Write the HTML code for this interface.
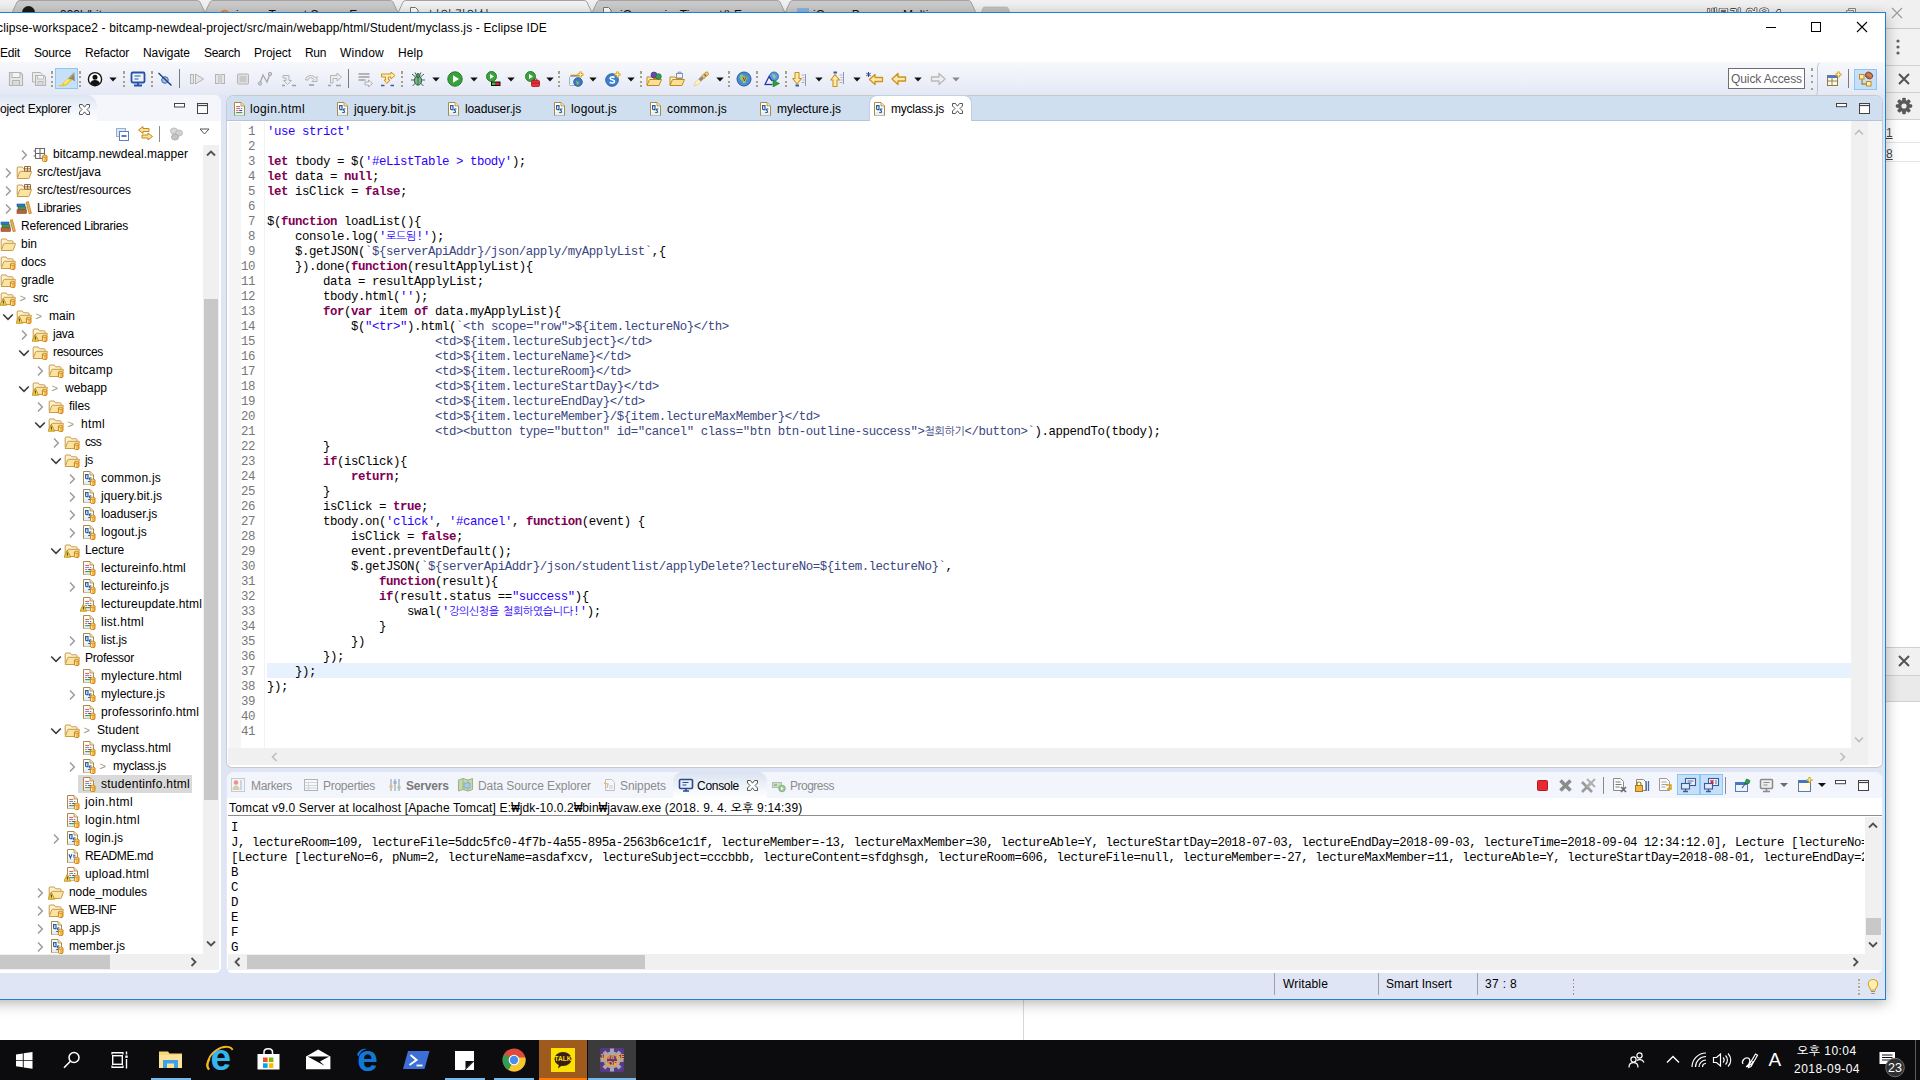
<!DOCTYPE html>
<html lang="ko"><head><meta charset="utf-8"><title>Eclipse IDE</title>
<style>
html,body{margin:0;padding:0;}
body{width:1920px;height:1080px;position:relative;overflow:hidden;background:#fff;font-family:"Liberation Sans","NanumGothic","Noto Sans CJK KR",sans-serif;font-size:12px;color:#000;}
.b{position:absolute;display:block;box-sizing:border-box;}
.t{position:absolute;white-space:pre;display:block;}
.m{font-family:"Liberation Mono","NanumGothic","Noto Sans CJK KR",monospace;}
.code{position:absolute;white-space:pre;display:block;font-family:"Liberation Mono","NanumGothic","Noto Sans CJK KR",monospace;font-size:12.4px;letter-spacing:-0.44px;height:15px;line-height:15px;color:#000;}
.code b{color:#7f0055;font-weight:bold;}
.code i{color:#2a00ff;font-style:normal;}
.code u{color:#3a4680;text-decoration:none;}
.code .k{font-size:11px;letter-spacing:-0.35px;}
.ln{position:absolute;white-space:pre;display:block;font-family:"Liberation Mono",monospace;font-size:12.4px;letter-spacing:-0.44px;height:15px;line-height:15px;color:#787878;text-align:right;width:30px;}
.con{position:absolute;white-space:pre;display:block;font-family:"Liberation Mono",monospace;font-size:12.4px;letter-spacing:-0.44px;height:15px;line-height:15px;color:#000;overflow:hidden;}

</style></head>
<body>
<div class="b" style="left:0px;top:0px;width:1920px;height:13px;background:#f1f1f1;"></div>
<svg class="b" style="left:0px;top:0px;" width="1100" height="13" viewBox="0 0 1100 13"><path d="M12 13L17 2Q18 0.5 20 0.5H197Q199 0.5 200 2L205 13z" fill="#cbcbcb" stroke="#a4a4a4" stroke-width="1"/><path d="M205 13L210 2Q211 0.5 213 0.5H390Q392 0.5 393 2L398 13z" fill="#cbcbcb" stroke="#a4a4a4" stroke-width="1"/><path d="M398 13L403 2Q404 0.5 406 0.5H584Q586 0.5 587 2L592 13z" fill="#f3f3f3" stroke="#a4a4a4" stroke-width="1"/><path d="M592 13L597 2Q598 0.5 600 0.5H777Q779 0.5 780 2L785 13z" fill="#cbcbcb" stroke="#a4a4a4" stroke-width="1"/><path d="M785 13L790 2Q791 0.5 793 0.5H968Q970 0.5 971 2L976 13z" fill="#cbcbcb" stroke="#a4a4a4" stroke-width="1"/><path d="M981 13l2-5q.3-1 1.500-1h22q1.200 0 1.500 1l2 5z" fill="#c4c4c4" stroke="#b0b0b0" stroke-width=".6"/></svg>
<div class="b" style="left:22px;top:6px;width:13px;height:7px;background:#1b1b1b;border-radius:7px 7px 0 0;"></div>
<span class="t " style="left:60px;top:6px;height:18px;line-height:18px;font-size:12px;color:#111;">333k/bit</span>
<span class="t " style="left:236px;top:6px;height:18px;line-height:18px;font-size:12px;color:#111;">java - Tomcat Server Er</span>
<span class="t " style="left:429px;top:6px;height:18px;line-height:18px;font-size:12px;color:#111;">나의 강의실</span>
<span class="t " style="left:620px;top:6px;height:18px;line-height:18px;font-size:12px;color:#111;">jQuery.ajaxTimeout() E</span>
<span class="t " style="left:813px;top:6px;height:18px;line-height:18px;font-size:12px;color:#111;">jQuery Progress Multi</span>
<svg class="b" style="left:218px;top:6px;" width="12" height="8" viewBox="0 0 12 8"><path d="M3 7c2-3 5-3 7-1" stroke="#f48024" stroke-width="1.600" fill="none"/></svg>
<svg class="b" style="left:409px;top:6px;" width="12" height="8" viewBox="0 0 12 8"><path d="M1.500 7V1.500h5l2.500 2.500V7" fill="#fff" stroke="#777" stroke-width="1"/></svg>
<svg class="b" style="left:602px;top:6px;" width="12" height="8" viewBox="0 0 12 8"><path d="M1.500 7V1.500h5l2.500 2.500V7" fill="#fff" stroke="#777" stroke-width="1"/></svg>
<div class="b" style="left:797px;top:8px;width:12px;height:5px;background:#8ab4e8;"></div>
<div class="b" style="left:1886px;top:0px;width:34px;height:28px;background:#f0f0f0;"></div>
<div class="b" style="left:1886px;top:28px;width:34px;height:1px;background:#c9c9c9;"></div>
<div class="b" style="left:1886px;top:29px;width:34px;height:36px;background:#f2f2f2;"></div>
<div class="b" style="left:1886px;top:65px;width:34px;height:1px;background:#d0d0d0;"></div>
<div class="b" style="left:1886px;top:66px;width:34px;height:26px;background:#f1f1f1;"></div>
<div class="b" style="left:1886px;top:92px;width:34px;height:1px;background:#d0d0d0;"></div>
<div class="b" style="left:1886px;top:93px;width:34px;height:26px;background:#f1f1f1;"></div>
<div class="b" style="left:1886px;top:119px;width:34px;height:1px;background:#d0d0d0;"></div>
<div class="b" style="left:1886px;top:142px;width:34px;height:1px;background:#e4e4e4;"></div>
<div class="b" style="left:1886px;top:161px;width:34px;height:1px;background:#e4e4e4;"></div>
<span class="t " style="left:1886px;top:124px;height:18px;line-height:18px;font-size:12px;color:#444;text-decoration:underline;">1</span>
<span class="t " style="left:1886px;top:145px;height:18px;line-height:18px;font-size:12px;color:#444;text-decoration:underline;">8</span>
<svg class="b" style="left:1890px;top:6px;" width="14" height="14" viewBox="0 0 14 14"><path d="M2 2l10 10M12 2l-10 10" stroke="#9a9a9a" stroke-width="1.100" fill="none"/></svg>
<svg class="b" style="left:1840px;top:0px;" width="30" height="13" viewBox="0 0 30 13"><path d="M6.500 13V10.500h7V13M8.500 10.500V8.500h7V13" stroke="#8a8a8a" stroke-width="1" fill="none"/></svg>
<span class="t " style="left:1705px;top:5.5px;height:18px;line-height:18px;font-size:13px;color:#fff;letter-spacing:0.099px;font-weight:bold;-webkit-text-stroke:1.300px #1a1a1a;paint-order:stroke fill;">새문자 없음 4</span>
<svg class="b" style="left:1893px;top:38px;" width="10" height="18" viewBox="0 0 10 18"><circle cx="5" cy="3" r="1.6" fill="#5f6368"/><circle cx="5" cy="9" r="1.6" fill="#5f6368"/><circle cx="5" cy="15" r="1.6" fill="#5f6368"/></svg>
<svg class="b" style="left:1897px;top:72px;" width="14" height="14" viewBox="0 0 14 14"><path d="M2 2l10 10M12 2L2 12" stroke="#555" stroke-width="2" fill="none"/></svg>
<svg class="b" style="left:1895px;top:97px;" width="18" height="18" viewBox="0 0 18 18"><g transform="translate(9 9)"><g fill="#5a5a5a"><rect x="-1.800" y="-8.200" width="3.600" height="16.400" rx="1"/><rect x="-1.800" y="-8.200" width="3.600" height="16.400" rx="1" transform="rotate(45)"/><rect x="-1.800" y="-8.200" width="3.600" height="16.400" rx="1" transform="rotate(90)"/><rect x="-1.800" y="-8.200" width="3.600" height="16.400" rx="1" transform="rotate(135)"/><circle r="6"/></g><circle r="2.600" fill="#f1f1f1"/></g></svg>
<div class="b" style="left:1886px;top:647px;width:34px;height:1px;background:#d0d0d0;"></div>
<div class="b" style="left:1886px;top:648px;width:34px;height:27px;background:#f1f1f1;"></div>
<div class="b" style="left:1886px;top:675px;width:34px;height:1px;background:#d0d0d0;"></div>
<div class="b" style="left:1886px;top:676px;width:34px;height:25px;background:#eaeaea;"></div>
<div class="b" style="left:1886px;top:701px;width:34px;height:1px;background:#d0d0d0;"></div>
<svg class="b" style="left:1897px;top:654px;" width="14" height="14" viewBox="0 0 14 14"><path d="M2 2l10 10M12 2L2 12" stroke="#555" stroke-width="2" fill="none"/></svg>
<div class="b" style="left:1023px;top:1000px;width:1px;height:40px;background:#d8d8d8;"></div>
<div class="b" style="left:-20px;top:12px;width:1906px;height:988px;background:#e0e5f5;border:1px solid #1a82d8;box-shadow:0 3px 13px rgba(0,0,0,.30);"></div>
<div class="b" style="left:-1px;top:13px;width:1886px;height:49px;background:#ffffff;"></div>
<span class="t " style="left:-3px;top:19px;height:18px;line-height:18px;font-size:12px;color:#000;letter-spacing:0.142px;">clipse-workspace2 - bitcamp-newdeal-project/src/main/webapp/html/Student/myclass.js - Eclipse IDE</span>
<svg class="b" style="left:1766px;top:21px;" width="12" height="12" viewBox="0 0 12 12"><path d="M0 6.500h10" stroke="#000" stroke-width="1"/></svg>
<svg class="b" style="left:1811px;top:22px;" width="11" height="11" viewBox="0 0 11 11"><rect x=".5" y=".5" width="9" height="9" fill="none" stroke="#000" stroke-width="1"/></svg>
<svg class="b" style="left:1856px;top:21px;" width="12" height="12" viewBox="0 0 12 12"><path d="M1 1l10 10M11 1L1 11" stroke="#000" stroke-width="1.100"/></svg>
<span class="t " style="left:0px;top:44px;height:18px;line-height:18px;font-size:12px;color:#000;letter-spacing:-0.170px;">Edit</span>
<span class="t " style="left:34px;top:44px;height:18px;line-height:18px;font-size:12px;color:#000;letter-spacing:-0.170px;">Source</span>
<span class="t " style="left:85px;top:44px;height:18px;line-height:18px;font-size:12px;color:#000;letter-spacing:-0.169px;">Refactor</span>
<span class="t " style="left:143px;top:44px;height:18px;line-height:18px;font-size:12px;color:#000;letter-spacing:-0.045px;">Navigate</span>
<span class="t " style="left:204px;top:44px;height:18px;line-height:18px;font-size:12px;color:#000;letter-spacing:-0.337px;">Search</span>
<span class="t " style="left:254px;top:44px;height:18px;line-height:18px;font-size:12px;color:#000;letter-spacing:-0.050px;">Project</span>
<span class="t " style="left:305px;top:44px;height:18px;line-height:18px;font-size:12px;color:#000;letter-spacing:-0.337px;">Run</span>
<span class="t " style="left:340px;top:44px;height:18px;line-height:18px;font-size:12px;color:#000;letter-spacing:0.220px;">Window</span>
<span class="t " style="left:398px;top:44px;height:18px;line-height:18px;font-size:12px;color:#000;letter-spacing:0.080px;">Help</span>
<div class="b" style="left:-1px;top:62px;width:1886px;height:33px;background:linear-gradient(180deg,#f7f8fc 0%,#eef1f9 50%,#e4e8f5 100%);"></div>
<svg class="b" style="left:7.5px;top:71px;" width="16" height="16" viewBox="0 0 16 16"><path d="M1.500 1.500h11l2 2v11h-13z" fill="#e6e6e6" stroke="#b4b4b4" stroke-width="1.200"/><rect x="4" y="1.500" width="8" height="5" fill="#f4f4f4" stroke="#b4b4b4"/><rect x="4.500" y="9.500" width="7" height="5" fill="#dadada" stroke="#b4b4b4"/></svg>
<svg class="b" style="left:30.5px;top:71px;" width="16" height="16" viewBox="0 0 16 16"><path d="M1.500 1.500h8l1.500 1.500v8h-9.500z" fill="#ececec" stroke="#b4b4b4"/><path d="M4.500 4.500h8.500l1.500 1.500v8.500h-10z" fill="#e6e6e6" stroke="#b4b4b4" stroke-width="1.100"/><rect x="6.500" y="4.500" width="6" height="3.500" fill="#f4f4f4" stroke="#b4b4b4" stroke-width=".8"/><rect x="7" y="10.500" width="5" height="4" fill="#dadada" stroke="#b4b4b4" stroke-width=".8"/></svg>
<div class="b" style="left:51px;top:71px;width:2px;height:3px;background:#a89f86;"></div>
<div class="b" style="left:51px;top:76px;width:2px;height:2px;background:#a89f86;"></div>
<div class="b" style="left:51px;top:80.5px;width:2px;height:2px;background:#a89f86;"></div>
<div class="b" style="left:51px;top:85px;width:2px;height:2px;background:#a89f86;"></div>
<div class="b" style="left:55px;top:68px;width:23px;height:21px;background:#c7e0fa;border:1px solid #8cc6f5;"></div>
<svg class="b" style="left:59px;top:71px;" width="16" height="16" viewBox="0 0 16 16"><path d="M0 14.600h5" stroke="#f2c81c" stroke-width="1.300"/><path d="M3.600 14.300L4.200 12.300 9 7.500 13.200 8.600 7 14.300z" fill="#f8d820" stroke="#e0b010" stroke-width=".5"/><path d="M5.500 12.500L9.500 8.500" stroke="#fdf0a0" stroke-width="1.200"/><path d="M9 7.500L15.300 1 15.800 10.500 13.200 8.600z" fill="#90866a"/><path d="M10.500 7L15 2.500" stroke="#b0a78a" stroke-width="1.200"/></svg>
<div class="b" style="left:79px;top:71px;width:2px;height:3px;background:#a89f86;"></div>
<div class="b" style="left:79px;top:76px;width:2px;height:2px;background:#a89f86;"></div>
<div class="b" style="left:79px;top:80.5px;width:2px;height:2px;background:#a89f86;"></div>
<div class="b" style="left:79px;top:85px;width:2px;height:2px;background:#a89f86;"></div>
<svg class="b" style="left:87.2px;top:71px;" width="16" height="16" viewBox="0 0 16 16"><circle cx="8" cy="8.200" r="6.600" fill="#fff" stroke="#111" stroke-width="1.400"/><circle cx="8" cy="6.200" r="2.500" fill="#111"/><path d="M3.200 12.300c.7-2.500 2.500-3.400 4.800-3.400s4.100.9 4.800 3.400A6.600 6.600 0 0 1 3.200 12.300z" fill="#111"/></svg>
<svg class="b" style="left:109px;top:76.7px;" width="8" height="5" viewBox="0 0 8 5"><path d="M.3.5h7.400L4 4.500z" fill="#111"/></svg>
<div class="b" style="left:122.5px;top:71px;width:2px;height:3px;background:#a89f86;"></div>
<div class="b" style="left:122.5px;top:76px;width:2px;height:2px;background:#a89f86;"></div>
<div class="b" style="left:122.5px;top:80.5px;width:2px;height:2px;background:#a89f86;"></div>
<div class="b" style="left:122.5px;top:85px;width:2px;height:2px;background:#a89f86;"></div>
<svg class="b" style="left:130px;top:71px;" width="16" height="16" viewBox="0 0 16 16"><rect x="1.500" y="1.500" width="13" height="10" rx="1.200" fill="#eef3fb" stroke="#2352a8" stroke-width="1.800"/><path d="M4.500 5h6M4.500 8h4" stroke="#2352a8" stroke-width="1.200"/><path d="M4 14.500h8M8 12v2.500" stroke="#2352a8" stroke-width="1.800"/></svg>
<div class="b" style="left:150.5px;top:71px;width:2px;height:3px;background:#a89f86;"></div>
<div class="b" style="left:150.5px;top:76px;width:2px;height:2px;background:#a89f86;"></div>
<div class="b" style="left:150.5px;top:80.5px;width:2px;height:2px;background:#a89f86;"></div>
<div class="b" style="left:150.5px;top:85px;width:2px;height:2px;background:#a89f86;"></div>
<svg class="b" style="left:157px;top:71px;" width="16" height="16" viewBox="0 0 16 16"><circle cx="8" cy="9" r="3.300" fill="#9ec1ea" stroke="#3a6ab0" stroke-width="1"/><path d="M1.500 2l13 12.500" stroke="#1c3a8a" stroke-width="1.300"/></svg>
<div class="b" style="left:179px;top:69px;width:1px;height:19px;background:#7a7a7a;"></div>
<svg class="b" style="left:188.5px;top:71px;" width="16" height="16" viewBox="0 0 16 16"><rect x="1.500" y="3.500" width="3" height="9" fill="#e6e6e6" stroke="#b4b4b4"/><path d="M6.500 3l8 5-8 5z" fill="#e6e6e6" stroke="#b4b4b4"/></svg>
<svg class="b" style="left:211.5px;top:71px;" width="16" height="16" viewBox="0 0 16 16"><rect x="3.500" y="3.500" width="3.500" height="9" fill="#e6e6e6" stroke="#b4b4b4"/><rect x="9" y="3.500" width="3.500" height="9" fill="#e6e6e6" stroke="#b4b4b4"/></svg>
<svg class="b" style="left:234.5px;top:71px;" width="16" height="16" viewBox="0 0 16 16"><rect x="2.500" y="3" width="11" height="10" rx="1" fill="#e0e0e0" stroke="#b4b4b4"/><rect x="4.500" y="5" width="7" height="6" fill="#c9c9c9"/></svg>
<svg class="b" style="left:257px;top:71px;" width="16" height="16" viewBox="0 0 16 16"><path d="M3 12L6 4l4 7 3-8" fill="none" stroke="#a8a8a8" stroke-width="1.300"/><circle cx="3" cy="12.500" r="1.700" fill="#d0d0d0" stroke="#a8a8a8"/><circle cx="13" cy="3" r="1.700" fill="#d0d0d0" stroke="#a8a8a8"/></svg>
<svg class="b" style="left:280.5px;top:71px;" width="16" height="16" viewBox="0 0 16 16"><path d="M2 4.500h6v5h2.500l-4 4-4-4H5v-2.500H2z" fill="#ededed" stroke="#b4b4b4"/><path d="M1 14.500h3M11 14.500h4" stroke="#a0a0a0" stroke-width="1.500"/></svg>
<svg class="b" style="left:303.5px;top:71px;" width="16" height="16" viewBox="0 0 16 16"><path d="M1.500 9c0-5 8-6 10-2l1.500-1.500v5h-5L10 8.500C8.500 6 3.500 6.500 4 9z" fill="#ededed" stroke="#b4b4b4"/><path d="M5 14h5" stroke="#a0a0a0" stroke-width="1.600"/></svg>
<svg class="b" style="left:327px;top:71px;" width="16" height="16" viewBox="0 0 16 16"><path d="M6 12V7.500h4V10l4.500-4L10 2v2.500H3.500V12z" fill="#ededed" stroke="#b4b4b4" transform="translate(0 0)"/><path d="M1 14.500h3M9 14.500h5" stroke="#a0a0a0" stroke-width="1.500"/></svg>
<div class="b" style="left:348px;top:69px;width:1px;height:19px;background:#7a7a7a;"></div>
<svg class="b" style="left:357px;top:71px;" width="16" height="16" viewBox="0 0 16 16"><path d="M1.500 3h11M1.500 6h11M1.500 9h7" stroke="#a0a0a0" stroke-width="1.500"/><path d="M8 11h3.500V9l4 3.500-4 3.500V14H8z" fill="#f2f2f2" stroke="#a8a8a8" stroke-width=".9"/></svg>
<svg class="b" style="left:380px;top:71px;" width="16" height="16" viewBox="0 0 16 16"><path d="M1.500 3h9.500V1l4 3.500L11 8V6H8.500v3H10l-3 3.500L4 9h1.500V6h-4z" fill="#fdecb0" stroke="#cf921c" stroke-width="1"/><path d="M1 14.500h3.500M10.500 14.500H14" stroke="#3a5a9a" stroke-width="1.600"/></svg>
<div class="b" style="left:401px;top:71px;width:2px;height:3px;background:#a89f86;"></div>
<div class="b" style="left:401px;top:76px;width:2px;height:2px;background:#a89f86;"></div>
<div class="b" style="left:401px;top:80.5px;width:2px;height:2px;background:#a89f86;"></div>
<div class="b" style="left:401px;top:85px;width:2px;height:2px;background:#a89f86;"></div>
<svg class="b" style="left:410px;top:71px;" width="16" height="16" viewBox="0 0 16 16"><g stroke="#3a6a4a" stroke-width="1" fill="none"><path d="M2 3l3.500 3M14 3l-3.500 3M1 9h3.500M15 9h-3.500M2.500 15l3-3M13.500 15l-3-3M6 3.500L5 1.500M10 3.500l1-2"/></g><ellipse cx="8" cy="9.500" rx="3.600" ry="4.600" fill="#7ab08a" stroke="#2a5a3a"/><circle cx="8" cy="4.500" r="2" fill="#5a8a6a" stroke="#2a5a3a" stroke-width=".8"/><path d="M8 6v8" stroke="#2a5a3a" stroke-width=".7"/></svg>
<svg class="b" style="left:431.5px;top:76.7px;" width="8" height="5" viewBox="0 0 8 5"><path d="M.3.5h7.400L4 4.500z" fill="#111"/></svg>
<svg class="b" style="left:447px;top:71px;" width="16" height="16" viewBox="0 0 16 16"><circle cx="8" cy="8" r="7.200" fill="#3aa23a" stroke="#1c7a24" stroke-width="1"/><path d="M6 4.200l6 3.800-6 3.800z" fill="#fff"/></svg>
<svg class="b" style="left:469.5px;top:76.7px;" width="8" height="5" viewBox="0 0 8 5"><path d="M.3.5h7.400L4 4.500z" fill="#111"/></svg>
<svg class="b" style="left:485px;top:71px;" width="16" height="16" viewBox="0 0 16 16"><circle cx="6.500" cy="5.500" r="5" fill="#3aa23a" stroke="#1c7a24" stroke-width=".9"/><path d="M5 3l4 2.500-4 2.500z" fill="#fff"/><rect x="6" y="10.500" width="9.500" height="4.500" fill="#111"/><rect x="7" y="11.500" width="3.500" height="2.500" fill="#2ac83a"/><rect x="10.500" y="11.500" width="4" height="2.500" fill="#e02020"/></svg>
<svg class="b" style="left:507px;top:76.7px;" width="8" height="5" viewBox="0 0 8 5"><path d="M.3.5h7.400L4 4.500z" fill="#111"/></svg>
<svg class="b" style="left:523.5px;top:71px;" width="16" height="16" viewBox="0 0 16 16"><circle cx="6.500" cy="5.500" r="5" fill="#3aa23a" stroke="#1c7a24" stroke-width=".9"/><path d="M5 3l4 2.500-4 2.500z" fill="#fff"/><rect x="7.500" y="9.500" width="8" height="6" rx="1" fill="#e8323a" stroke="#a8141c" stroke-width=".8"/><path d="M10 9.500V8h3v1.500M7.500 12h8" stroke="#a8141c" stroke-width=".9" fill="none"/></svg>
<svg class="b" style="left:545.5px;top:76.7px;" width="8" height="5" viewBox="0 0 8 5"><path d="M.3.5h7.400L4 4.500z" fill="#111"/></svg>
<div class="b" style="left:558px;top:71px;width:2px;height:3px;background:#a89f86;"></div>
<div class="b" style="left:558px;top:76px;width:2px;height:2px;background:#a89f86;"></div>
<div class="b" style="left:558px;top:80.5px;width:2px;height:2px;background:#a89f86;"></div>
<div class="b" style="left:558px;top:85px;width:2px;height:2px;background:#a89f86;"></div>
<svg class="b" style="left:567.5px;top:71px;" width="16" height="16" viewBox="0 0 16 16"><path d="M2.500 4.500h9M2.500 4.500" stroke="#c08a1e" stroke-width="1.500"/><rect x="1.500" y="5.500" width="9" height="9" rx="1" fill="#e8eef8" stroke="#9ab0d0"/><circle cx="10" cy="11" r="4.300" fill="#3a7ac8" stroke="#1c4a8a" stroke-width=".8"/><path d="M8 9.500c1 1 2.500.5 3 2s-1 2.500-2 2.500" fill="#7ac05a"/><path d="M12.500 .5v6M9.500 3.500h6" stroke="#d9a21b" stroke-width="2.400"/><path d="M12.500 1.500v4M10.500 3.500h4" stroke="#fff6c0" stroke-width=".9"/></svg>
<svg class="b" style="left:588.5px;top:76.7px;" width="8" height="5" viewBox="0 0 8 5"><path d="M.3.5h7.400L4 4.500z" fill="#111"/></svg>
<svg class="b" style="left:605px;top:71px;" width="16" height="16" viewBox="0 0 16 16"><circle cx="7" cy="9" r="6.300" fill="#3a82d0" stroke="#1c5aa0" stroke-width=".9"/><path d="M9.500 6.500c-2-1.200-4.500-.5-4.300 1 .2 1.700 4.300 1 4.300 3 0 1.600-2.800 2-4.800.8" fill="none" stroke="#fff" stroke-width="1.600"/><path d="M12.500 .5v6M9.500 3.500h6" stroke="#d9a21b" stroke-width="2.400"/><path d="M12.500 1.500v4M10.500 3.500h4" stroke="#fff6c0" stroke-width=".9"/></svg>
<svg class="b" style="left:626.5px;top:76.7px;" width="8" height="5" viewBox="0 0 8 5"><path d="M.3.5h7.400L4 4.500z" fill="#111"/></svg>
<div class="b" style="left:639.5px;top:71px;width:2px;height:3px;background:#a89f86;"></div>
<div class="b" style="left:639.5px;top:76px;width:2px;height:2px;background:#a89f86;"></div>
<div class="b" style="left:639.5px;top:80.5px;width:2px;height:2px;background:#a89f86;"></div>
<div class="b" style="left:639.5px;top:85px;width:2px;height:2px;background:#a89f86;"></div>
<svg class="b" style="left:646px;top:71px;" width="16" height="16" viewBox="0 0 16 16"><path d="M1 14V6h5l1.500 1.500H13V9" fill="#fdf0c8" stroke="#c08a1e"/><path d="M1 14.500l2.500-6H15.500l-2.500 6z" fill="#fbdf95" stroke="#c08a1e" stroke-linejoin="round"/><circle cx="8" cy="4" r="3" fill="#6a4aa0" stroke="#4a2a80" stroke-width=".7"/><circle cx="12.500" cy="5.500" r="2.800" fill="#3a9a5a" stroke="#1c6a3a" stroke-width=".7"/></svg>
<svg class="b" style="left:669px;top:71px;" width="16" height="16" viewBox="0 0 16 16"><path d="M1 14V6h5l1.500 1.500H13V9" fill="#fdf0c8" stroke="#c08a1e"/><path d="M1 14.500l2.500-6H15.500l-2.500 6z" fill="#fbdf95" stroke="#c08a1e" stroke-linejoin="round"/><rect x="7.500" y="2.500" width="6" height="4.500" fill="#eef3fb" stroke="#7a8ab0" stroke-width=".9"/><path d="M9 2.500V1.200h3v1.300" fill="none" stroke="#7a8ab0" stroke-width=".9"/></svg>
<svg class="b" style="left:693px;top:71px;" width="16" height="16" viewBox="0 0 16 16"><path d="M1 15l4-1.500 3-3L5.500 8l-3 3z" fill="#fdf3c0" stroke="#e0c060" stroke-width=".6"/><path d="M5.500 8l2.500 2.500 3-3L8.500 5z" fill="#8a8a8a"/><path d="M8.500 5L11 7.500l4.500-4c.5-1.500-1-3-2.500-2.500z" fill="#f7c85a" stroke="#c08a1e" stroke-width=".8"/><path d="M11.500 3.500l1.500 1.500" stroke="#3a5a9a" stroke-width="1.200"/></svg>
<svg class="b" style="left:715.5px;top:76.7px;" width="8" height="5" viewBox="0 0 8 5"><path d="M.3.5h7.400L4 4.500z" fill="#111"/></svg>
<div class="b" style="left:728px;top:71px;width:2px;height:3px;background:#a89f86;"></div>
<div class="b" style="left:728px;top:76px;width:2px;height:2px;background:#a89f86;"></div>
<div class="b" style="left:728px;top:80.5px;width:2px;height:2px;background:#a89f86;"></div>
<div class="b" style="left:728px;top:85px;width:2px;height:2px;background:#a89f86;"></div>
<svg class="b" style="left:735.5px;top:71px;" width="16" height="16" viewBox="0 0 16 16"><circle cx="8" cy="8" r="7" fill="#4a8ad8" stroke="#2a5aa0" stroke-width="1"/><path d="M4 4c2-1 3 0 4 1s3 0 3.500 1.500-1.500 2-1.500 3.500-1 3-2.500 2.500S7 10 5.500 9.500 3 6 4 4z" fill="#8ac86a"/><path d="M7 6l1.500 4 1.500-4" fill="none" stroke="#c03020" stroke-width=".9"/></svg>
<div class="b" style="left:756px;top:71px;width:2px;height:3px;background:#a89f86;"></div>
<div class="b" style="left:756px;top:76px;width:2px;height:2px;background:#a89f86;"></div>
<div class="b" style="left:756px;top:80.5px;width:2px;height:2px;background:#a89f86;"></div>
<div class="b" style="left:756px;top:85px;width:2px;height:2px;background:#a89f86;"></div>
<svg class="b" style="left:763.5px;top:71px;" width="16" height="16" viewBox="0 0 16 16"><circle cx="10" cy="5.500" r="4.500" fill="#5a9ae0" stroke="#2a5aa0" stroke-width=".8"/><path d="M8 3.500c1.500-.5 2.500.5 3.500 1.500s-1 2-1.500 3" fill="#9ad07a"/><path d="M1 13.500l4-8 3 4.500" fill="none" stroke="#2a3a9a" stroke-width="1.300"/><path d="M.5 13.500h8" stroke="#2a3a9a" stroke-width="1.300"/><path d="M9 9l6.500 3.500L9 16z" fill="#2aa03a" stroke="#1c7a24" stroke-width=".6"/></svg>
<div class="b" style="left:784.5px;top:71px;width:2px;height:3px;background:#a89f86;"></div>
<div class="b" style="left:784.5px;top:76px;width:2px;height:2px;background:#a89f86;"></div>
<div class="b" style="left:784.5px;top:80.5px;width:2px;height:2px;background:#a89f86;"></div>
<div class="b" style="left:784.5px;top:85px;width:2px;height:2px;background:#a89f86;"></div>
<svg class="b" style="left:792px;top:71px;" width="16" height="16" viewBox="0 0 16 16"><path d="M3 1.500h4v6h2.500L5 13 .7 7.500H3z" fill="#fdecb0" stroke="#cf921c" stroke-width="1.100" stroke-linejoin="round"/><path d="M13.500 3v12" stroke="#8a9ab0" stroke-width="1"/><path d="M9.500 4h3M10.500 6.500h2M10.500 9h2M9.500 11.500h3" stroke="#a0a8b8" stroke-width=".9"/><rect x="3.500" y="13.500" width="3.500" height="2" fill="#3a5aa8"/></svg>
<svg class="b" style="left:814.5px;top:76.7px;" width="8" height="5" viewBox="0 0 8 5"><path d="M.3.5h7.400L4 4.500z" fill="#111"/></svg>
<svg class="b" style="left:830px;top:71px;" width="16" height="16" viewBox="0 0 16 16"><path d="M3 15.500h4v-6.500h2.500L5 3.500.7 9H3z" fill="#fdecb0" stroke="#cf921c" stroke-width="1.100" stroke-linejoin="round"/><path d="M13.500 1v12" stroke="#8a9ab0" stroke-width="1"/><path d="M9.500 4h3M10.500 6.500h2M10.500 9h2M9.500 11.500h3" stroke="#a0a8b8" stroke-width=".9"/><rect x="3.500" y=".5" width="3.500" height="2" fill="#3a5aa8"/></svg>
<svg class="b" style="left:852.5px;top:76.7px;" width="8" height="5" viewBox="0 0 8 5"><path d="M.3.5h7.400L4 4.500z" fill="#111"/></svg>
<svg class="b" style="left:866px;top:71px;" width="18" height="16" viewBox="0 0 18 16"><path d="M8 3L2.500 8 8 13v-3h7.500V6H8z" fill="#fdecb0" stroke="#cf921c" stroke-width="1.300" stroke-linejoin="round" transform="translate(1 0.500)"/><path d="M2.500 1v5M.3 2.200l4.400 2.600M4.700 2.200L.3 4.800" stroke="#2a4a9a" stroke-width="1"/></svg>
<svg class="b" style="left:891px;top:71px;" width="16" height="16" viewBox="0 0 16 16"><path d="M7 2.500L1 8l6 5.500V10h7.500V6H7z" fill="#fdecb0" stroke="#cf921c" stroke-width="1.400" stroke-linejoin="round"/></svg>
<svg class="b" style="left:913.5px;top:76.7px;" width="8" height="5" viewBox="0 0 8 5"><path d="M.3.5h7.400L4 4.500z" fill="#111"/></svg>
<svg class="b" style="left:929.5px;top:71px;" width="16" height="16" viewBox="0 0 16 16"><path d="M9 2.500L15 8l-6 5.500V10H1.500V6H9z" fill="#f0f0f0" stroke="#b8b8b8" stroke-width="1.300" stroke-linejoin="round"/></svg>
<svg class="b" style="left:951.5px;top:76.7px;" width="8" height="5" viewBox="0 0 8 5"><path d="M.3.5h7.400L4 4.500z" fill="#8a8a8a"/></svg>
<div class="b" style="left:1728px;top:68px;width:77px;height:21px;background:#ffffff;border:1px solid #6e6e6e;"></div>
<span class="t " style="left:1731px;top:70px;height:18px;line-height:18px;font-size:12px;color:#5f5f5f;letter-spacing:-0.085px;">Quick Access</span>
<div class="b" style="left:1811px;top:68px;width:2px;height:3px;background:#a89f86;"></div>
<div class="b" style="left:1811px;top:74.5px;width:2px;height:2px;background:#a89f86;"></div>
<div class="b" style="left:1811px;top:81px;width:2px;height:2px;background:#a89f86;"></div>
<div class="b" style="left:1811px;top:87.5px;width:2px;height:2px;background:#a89f86;"></div>
<svg class="b" style="left:1813px;top:62px;" width="10" height="34" viewBox="0 0 10 34"><path d="M2.500 33.500C4 32.500 4.500 31.500 4.500 29V5.500C4.500 3.500 5 2.500 6.500 1" fill="none" stroke="#bcc3d6" stroke-width="1"/></svg>
<svg class="b" style="left:1825.5px;top:71px;" width="16" height="16" viewBox="0 0 16 16"><rect x="1.500" y="4.500" width="10" height="10" fill="#fdf6e0" stroke="#8a7a4a"/><rect x="1.500" y="4.500" width="10" height="2.500" fill="#4a7ac8"/><path d="M1.500 10h10M6 7v7.500" stroke="#8a7a4a" stroke-width=".9"/><path d="M12.500 .5v6M9.500 3.500h6" stroke="#d9a21b" stroke-width="2.400"/><path d="M12.500 1.500v4M10.500 3.500h4" stroke="#fff6c0" stroke-width=".9"/></svg>
<div class="b" style="left:1848px;top:69px;width:1px;height:19px;background:#7a7a7a;"></div>
<div class="b" style="left:1854px;top:69px;width:23px;height:21px;background:#c7e0fa;border:1px solid #8cc6f5;"></div>
<svg class="b" style="left:1857.5px;top:71px;" width="16" height="16" viewBox="0 0 16 16"><path d="M4 6v7h5M4 9.500" fill="none" stroke="#b08a2a" stroke-width="1.300"/><rect x="1.500" y="3.500" width="4.500" height="4.500" fill="#fdf0b0" stroke="#c08a1e"/><rect x="8.500" y="10.500" width="4.500" height="4.500" fill="#fdf0b0" stroke="#c08a1e"/><ellipse cx="11" cy="4.500" rx="3.800" ry="3.200" transform="rotate(35 11 4.500)" fill="#b86a3a" stroke="#7a3a1a" stroke-width=".8"/><path d="M8.500 3l5 3.500M9.500 2l4.500 3" stroke="#e8b08a" stroke-width=".6"/></svg>
<div class="b" style="left:-1px;top:95px;width:222px;height:878px;background:#ffffff;border-radius:0 7px 6px 0;"></div>
<div class="b" style="left:-1px;top:95px;width:222px;height:26px;background:#f4f6fc;border-radius:0 7px 0 0;"></div>
<div class="b" style="left:-1px;top:95px;width:98px;height:26px;background:linear-gradient(180deg,#dde5f2 0%,#eef2f9 45%,#ffffff 100%);border-radius:0 10px 0 0;"></div>
<span class="t " style="left:0px;top:100px;height:18px;line-height:18px;font-size:12px;color:#000;letter-spacing:-0.169px;">oject Explorer</span>
<svg class="b" style="left:78px;top:102.5px;" width="13" height="13" viewBox="0 0 13 13"><path d="M1.5 1.500h3l2 2.700 2-2.700h3v2.500L9 6.500l2.500 2.500v2.500h-3l-2-2.700-2 2.700h-3V9L4 6.500 1.500 4z" fill="#fff" stroke="#555" stroke-width="1"/></svg>
<svg class="b" style="left:173.5px;top:103px;" width="12" height="6" viewBox="0 0 12 6"><rect x=".5" y=".5" width="10" height="3.500" fill="#fff" stroke="#444" stroke-width="1"/></svg>
<svg class="b" style="left:196.5px;top:102.5px;" width="12" height="12" viewBox="0 0 12 12"><rect x=".5" y=".5" width="10" height="10" fill="#fff" stroke="#444" stroke-width="1"/><path d="M.5 2.500h10" stroke="#444" stroke-width="1.200"/></svg>
<svg class="b" style="left:115px;top:126.5px;" width="16" height="16" viewBox="0 0 16 16"><rect x="1.500" y="1.500" width="9" height="8" fill="#dbe7f5" stroke="#9ab0d0" stroke-width="1"/><rect x="4.500" y="4.500" width="9" height="9" fill="#fff" stroke="#5a82c0" stroke-width="1"/><path d="M6.500 9h5" stroke="#1d4fa0" stroke-width="1.500"/></svg>
<svg class="b" style="left:137px;top:125px;" width="17" height="17" viewBox="0 0 17 17"><path d="M6 1.500L1.500 5 6 8.500v-2h6v-3H6z" fill="#fbe29a" stroke="#c08a1e" stroke-width="1"/><path d="M11 8l4.500 3.500L11 15v-2H5v-3h6z" fill="#fbe29a" stroke="#c08a1e" stroke-width="1"/></svg>
<div class="b" style="left:159px;top:126px;width:1px;height:16px;background:#8a8a8a;"></div>
<svg class="b" style="left:168px;top:126px;" width="16" height="16" viewBox="0 0 16 16"><ellipse cx="6" cy="5" rx="3.500" ry="3" fill="#d8d8d8" stroke="#bdbdbd"/><ellipse cx="11" cy="7" rx="3.500" ry="3" fill="#d0d0d0" stroke="#bdbdbd"/><ellipse cx="7" cy="11" rx="3.500" ry="3" fill="#c4c4c4" stroke="#b0b0b0"/></svg>
<svg class="b" style="left:199px;top:128px;" width="12" height="8" viewBox="0 0 12 8"><path d="M1 1h9L5.500 6z" fill="#fff" stroke="#555" stroke-width="1"/></svg>
<svg class="b" style="left:19.5px;top:149px;" width="8" height="12" viewBox="0 0 8 12"><path d="M2 1.500L6.300 6 2 10.500" fill="none" stroke="#9c9c9c" stroke-width="1.500"/></svg>
<svg class="b" style="left:32px;top:146px;" width="16" height="16" viewBox="0 0 16 16"><g fill="none" stroke="#6a6a6a" stroke-width="1.100"><path d="M3.500 2.500h9v10h-9zM3.500 7.500h9M8 2.500v10M1.500 5h2M1.500 10h2"/></g><g><path d="M10.4 10.2h4.6v4.6c0 1.100-4.600 1.100-4.600 0z" fill="#f9b63e" stroke="#c47c10" stroke-width=".9"/><path d="M11.600 11.500v3.600" stroke="#fde9b0" stroke-width="1"/><ellipse cx="12.700" cy="10.200" rx="2.300" ry="1" fill="#fde7a8" stroke="#c47c10" stroke-width=".8"/></g></svg>
<span class="t " style="left:53px;top:145px;height:18px;line-height:18px;font-size:12px;color:#000;letter-spacing:0.042px;">bitcamp.newdeal.mapper</span>
<svg class="b" style="left:3.5px;top:167px;" width="8" height="12" viewBox="0 0 8 12"><path d="M2 1.500L6.300 6 2 10.500" fill="none" stroke="#9c9c9c" stroke-width="1.500"/></svg>
<svg class="b" style="left:16px;top:164px;" width="16" height="16" viewBox="0 0 16 16"><path d="M1.2 13.200V3.800c0-.5.300-.8.800-.8h4.200l1.300 1.800h4.700c.5 0 .8.300.8.800v2" fill="#fdf3d2" stroke="#c2923c" stroke-width=".9"/><path d="M1.200 14.500l2.500-6.600c.1-.4.400-.6.800-.6h10.400c.5 0 .7.300.5.800l-2.200 5.900c-.1.300-.4.500-.8.500z" fill="#fbe3a0" stroke="#c2923c" stroke-width=".9" stroke-linejoin="round"/><g stroke="#8a5a2a" stroke-width=".9" fill="#fff8e8"><path d="M8.500 2.500h6v4.600h-6z"/><path d="M8.500 4.800h6M11.500 2.500v4.600" fill="none"/></g></svg>
<span class="t " style="left:37px;top:163px;height:18px;line-height:18px;font-size:12px;color:#000;letter-spacing:-0.002px;">src/test/java</span>
<svg class="b" style="left:3.5px;top:185px;" width="8" height="12" viewBox="0 0 8 12"><path d="M2 1.500L6.300 6 2 10.500" fill="none" stroke="#9c9c9c" stroke-width="1.500"/></svg>
<svg class="b" style="left:16px;top:182px;" width="16" height="16" viewBox="0 0 16 16"><path d="M1.2 13.200V3.800c0-.5.300-.8.800-.8h4.200l1.300 1.800h4.700c.5 0 .8.300.8.800v2" fill="#fdf3d2" stroke="#c2923c" stroke-width=".9"/><path d="M1.200 14.500l2.500-6.600c.1-.4.400-.6.800-.6h10.400c.5 0 .7.300.5.800l-2.200 5.900c-.1.300-.4.500-.8.500z" fill="#fbe3a0" stroke="#c2923c" stroke-width=".9" stroke-linejoin="round"/><g stroke="#8a5a2a" stroke-width=".9" fill="#fff8e8"><path d="M8.500 2.500h6v4.600h-6z"/><path d="M8.500 4.800h6M11.500 2.500v4.600" fill="none"/></g></svg>
<span class="t " style="left:37px;top:181px;height:18px;line-height:18px;font-size:12px;color:#000;letter-spacing:-0.039px;">src/test/resources</span>
<svg class="b" style="left:3.5px;top:203px;" width="8" height="12" viewBox="0 0 8 12"><path d="M2 1.500L6.300 6 2 10.500" fill="none" stroke="#9c9c9c" stroke-width="1.500"/></svg>
<svg class="b" style="left:16px;top:200px;" width="16" height="16" viewBox="0 0 16 16"><rect x="1" y="4" width="8" height="2.600" fill="#2a78c8" stroke="#1d5a9a" stroke-width=".6"/><rect x="2" y="6.800" width="8" height="2.800" fill="#3f9a5a" stroke="#2a6a3a" stroke-width=".6"/><rect x="1" y="9.800" width="9.500" height="3.600" fill="#b8623a" stroke="#8a4222" stroke-width=".6"/><path d="M10.200 2.200l2.200-.6 3 11.600-2.300.5z" fill="#f0b04a" stroke="#b8781e" stroke-width=".7"/></svg>
<span class="t " style="left:37px;top:199px;height:18px;line-height:18px;font-size:12px;color:#000;letter-spacing:-0.224px;">Libraries</span>
<svg class="b" style="left:0px;top:218px;" width="16" height="16" viewBox="0 0 16 16"><rect x="1" y="4" width="8" height="2.600" fill="#2a78c8" stroke="#1d5a9a" stroke-width=".6"/><rect x="2" y="6.800" width="8" height="2.800" fill="#3f9a5a" stroke="#2a6a3a" stroke-width=".6"/><rect x="1" y="9.800" width="9.500" height="3.600" fill="#b8623a" stroke="#8a4222" stroke-width=".6"/><path d="M10.200 2.200l2.200-.6 3 11.600-2.300.5z" fill="#f0b04a" stroke="#b8781e" stroke-width=".7"/></svg>
<span class="t " style="left:21px;top:217px;height:18px;line-height:18px;font-size:12px;color:#000;letter-spacing:-0.220px;">Referenced Libraries</span>
<svg class="b" style="left:0px;top:236px;" width="16" height="16" viewBox="0 0 16 16"><path d="M1.2 13.200V3.800c0-.5.300-.8.800-.8h4.200l1.300 1.800h4.700c.5 0 .8.300.8.800v2" fill="#fdf3d2" stroke="#c2923c" stroke-width=".9"/><path d="M1.200 14.500l2.500-6.600c.1-.4.400-.6.800-.6h10.400c.5 0 .7.300.5.800l-2.200 5.900c-.1.300-.4.500-.8.500z" fill="#fbe3a0" stroke="#c2923c" stroke-width=".9" stroke-linejoin="round"/></svg>
<span class="t " style="left:21px;top:235px;height:18px;line-height:18px;font-size:12px;color:#000;letter-spacing:-0.004px;">bin</span>
<svg class="b" style="left:0px;top:254px;" width="16" height="16" viewBox="0 0 16 16"><path d="M1.2 13.200V3.800c0-.5.300-.8.800-.8h4.200l1.300 1.800h4.700c.5 0 .8.300.8.800v2" fill="#fdf3d2" stroke="#c2923c" stroke-width=".9"/><path d="M1.200 14.500l2.500-6.600c.1-.4.400-.6.800-.6h10.400c.5 0 .7.300.5.800l-2.200 5.900c-.1.300-.4.500-.8.500z" fill="#fbe3a0" stroke="#c2923c" stroke-width=".9" stroke-linejoin="round"/><g><path d="M10.4 10.2h4.6v4.6c0 1.100-4.600 1.100-4.600 0z" fill="#f9b63e" stroke="#c47c10" stroke-width=".9"/><path d="M11.600 11.500v3.600" stroke="#fde9b0" stroke-width="1"/><ellipse cx="12.700" cy="10.200" rx="2.300" ry="1" fill="#fde7a8" stroke="#c47c10" stroke-width=".8"/></g></svg>
<span class="t " style="left:21px;top:253px;height:18px;line-height:18px;font-size:12px;color:#000;letter-spacing:-0.087px;">docs</span>
<svg class="b" style="left:0px;top:272px;" width="16" height="16" viewBox="0 0 16 16"><path d="M1.2 13.200V3.800c0-.5.300-.8.800-.8h4.200l1.300 1.800h4.700c.5 0 .8.300.8.800v2" fill="#fdf3d2" stroke="#c2923c" stroke-width=".9"/><path d="M1.200 14.500l2.500-6.600c.1-.4.400-.6.800-.6h10.400c.5 0 .7.300.5.800l-2.200 5.900c-.1.300-.4.500-.8.500z" fill="#fbe3a0" stroke="#c2923c" stroke-width=".9" stroke-linejoin="round"/><g><path d="M10.4 10.2h4.6v4.6c0 1.100-4.600 1.100-4.600 0z" fill="#f9b63e" stroke="#c47c10" stroke-width=".9"/><path d="M11.600 11.500v3.600" stroke="#fde9b0" stroke-width="1"/><ellipse cx="12.700" cy="10.200" rx="2.300" ry="1" fill="#fde7a8" stroke="#c47c10" stroke-width=".8"/></g></svg>
<span class="t " style="left:21px;top:271px;height:18px;line-height:18px;font-size:12px;color:#000;letter-spacing:-0.059px;">gradle</span>
<svg class="b" style="left:0px;top:290px;" width="16" height="16" viewBox="0 0 16 16"><path d="M1.2 13.200V3.800c0-.5.300-.8.800-.8h4.200l1.300 1.800h4.700c.5 0 .8.300.8.800v2" fill="#fdf3d2" stroke="#c2923c" stroke-width=".9"/><path d="M1.200 14.500l2.500-6.600c.1-.4.400-.6.800-.6h10.400c.5 0 .7.300.5.800l-2.200 5.900c-.1.300-.4.500-.8.500z" fill="#fbe3a0" stroke="#c2923c" stroke-width=".9" stroke-linejoin="round"/><g><path d="M10.4 10.2h4.6v4.6c0 1.100-4.600 1.100-4.600 0z" fill="#f9b63e" stroke="#c47c10" stroke-width=".9"/><path d="M11.600 11.500v3.600" stroke="#fde9b0" stroke-width="1"/><ellipse cx="12.700" cy="10.200" rx="2.300" ry="1" fill="#fde7a8" stroke="#c47c10" stroke-width=".8"/></g><g><path d="M3.3 8.200l3.400 7H-.1z" fill="#f9d24a" stroke="#b8860b" stroke-width=".8" stroke-linejoin="round"/><rect x="2.900" y="10.600" width=".9" height="2.400" fill="#333"/><rect x="2.900" y="13.400" width=".9" height=".9" fill="#333"/></g></svg>
<span class="t " style="left:19.5px;top:289px;height:18px;line-height:18px;font-size:11px;color:#a39676;">&gt;</span>
<span class="t " style="left:33px;top:289px;height:18px;line-height:18px;font-size:12px;color:#000;letter-spacing:-0.332px;">src</span>
<svg class="b" style="left:1.5px;top:312.7px;" width="12" height="8" viewBox="0 0 12 8"><path d="M1.200 1.500L6 6.300 10.800 1.500" fill="none" stroke="#3c3c3c" stroke-width="1.600"/></svg>
<svg class="b" style="left:16px;top:308px;" width="16" height="16" viewBox="0 0 16 16"><path d="M1.2 13.200V3.800c0-.5.300-.8.800-.8h4.200l1.300 1.800h4.700c.5 0 .8.300.8.800v2" fill="#fdf3d2" stroke="#c2923c" stroke-width=".9"/><path d="M1.200 14.500l2.500-6.600c.1-.4.400-.6.800-.6h10.400c.5 0 .7.300.5.800l-2.200 5.900c-.1.300-.4.500-.8.500z" fill="#fbe3a0" stroke="#c2923c" stroke-width=".9" stroke-linejoin="round"/><g><path d="M10.4 10.2h4.6v4.6c0 1.100-4.600 1.100-4.600 0z" fill="#f9b63e" stroke="#c47c10" stroke-width=".9"/><path d="M11.600 11.500v3.600" stroke="#fde9b0" stroke-width="1"/><ellipse cx="12.700" cy="10.200" rx="2.300" ry="1" fill="#fde7a8" stroke="#c47c10" stroke-width=".8"/></g><g><path d="M3.3 8.200l3.400 7H-.1z" fill="#f9d24a" stroke="#b8860b" stroke-width=".8" stroke-linejoin="round"/><rect x="2.900" y="10.600" width=".9" height="2.400" fill="#333"/><rect x="2.900" y="13.400" width=".9" height=".9" fill="#333"/></g></svg>
<span class="t " style="left:35.5px;top:307px;height:18px;line-height:18px;font-size:11px;color:#a39676;">&gt;</span>
<span class="t " style="left:49px;top:307px;height:18px;line-height:18px;font-size:12px;color:#000;letter-spacing:-0.002px;">main</span>
<svg class="b" style="left:19.5px;top:329px;" width="8" height="12" viewBox="0 0 8 12"><path d="M2 1.500L6.300 6 2 10.500" fill="none" stroke="#9c9c9c" stroke-width="1.500"/></svg>
<svg class="b" style="left:32px;top:326px;" width="16" height="16" viewBox="0 0 16 16"><path d="M1.2 13.200V3.800c0-.5.300-.8.800-.8h4.200l1.300 1.800h4.700c.5 0 .8.300.8.800v2" fill="#fdf3d2" stroke="#c2923c" stroke-width=".9"/><path d="M1.200 14.500l2.500-6.600c.1-.4.400-.6.800-.6h10.400c.5 0 .7.300.5.800l-2.200 5.900c-.1.300-.4.500-.8.500z" fill="#fbe3a0" stroke="#c2923c" stroke-width=".9" stroke-linejoin="round"/><g><path d="M10.4 10.2h4.6v4.6c0 1.100-4.600 1.100-4.600 0z" fill="#f9b63e" stroke="#c47c10" stroke-width=".9"/><path d="M11.600 11.500v3.600" stroke="#fde9b0" stroke-width="1"/><ellipse cx="12.700" cy="10.200" rx="2.300" ry="1" fill="#fde7a8" stroke="#c47c10" stroke-width=".8"/></g><g><path d="M3.3 8.200l3.400 7H-.1z" fill="#f9d24a" stroke="#b8860b" stroke-width=".8" stroke-linejoin="round"/><rect x="2.900" y="10.600" width=".9" height="2.400" fill="#333"/><rect x="2.900" y="13.400" width=".9" height=".9" fill="#333"/></g></svg>
<span class="t " style="left:53px;top:325px;height:18px;line-height:18px;font-size:12px;color:#000;letter-spacing:-0.253px;">java</span>
<svg class="b" style="left:17.5px;top:348.7px;" width="12" height="8" viewBox="0 0 12 8"><path d="M1.200 1.500L6 6.300 10.800 1.500" fill="none" stroke="#3c3c3c" stroke-width="1.600"/></svg>
<svg class="b" style="left:32px;top:344px;" width="16" height="16" viewBox="0 0 16 16"><path d="M1.2 13.200V3.800c0-.5.300-.8.800-.8h4.200l1.300 1.800h4.700c.5 0 .8.300.8.800v2" fill="#fdf3d2" stroke="#c2923c" stroke-width=".9"/><path d="M1.200 14.500l2.500-6.600c.1-.4.400-.6.800-.6h10.400c.5 0 .7.300.5.800l-2.200 5.900c-.1.300-.4.500-.8.500z" fill="#fbe3a0" stroke="#c2923c" stroke-width=".9" stroke-linejoin="round"/><g><path d="M10.4 10.2h4.6v4.6c0 1.100-4.600 1.100-4.600 0z" fill="#f9b63e" stroke="#c47c10" stroke-width=".9"/><path d="M11.600 11.500v3.600" stroke="#fde9b0" stroke-width="1"/><ellipse cx="12.700" cy="10.200" rx="2.300" ry="1" fill="#fde7a8" stroke="#c47c10" stroke-width=".8"/></g></svg>
<span class="t " style="left:53px;top:343px;height:18px;line-height:18px;font-size:12px;color:#000;letter-spacing:-0.299px;">resources</span>
<svg class="b" style="left:35.5px;top:365px;" width="8" height="12" viewBox="0 0 8 12"><path d="M2 1.500L6.300 6 2 10.500" fill="none" stroke="#9c9c9c" stroke-width="1.500"/></svg>
<svg class="b" style="left:48px;top:362px;" width="16" height="16" viewBox="0 0 16 16"><path d="M1.2 13.200V3.800c0-.5.300-.8.800-.8h4.200l1.300 1.800h4.700c.5 0 .8.300.8.800v2" fill="#fdf3d2" stroke="#c2923c" stroke-width=".9"/><path d="M1.200 14.500l2.500-6.600c.1-.4.400-.6.800-.6h10.400c.5 0 .7.300.5.800l-2.200 5.900c-.1.300-.4.500-.8.500z" fill="#fbe3a0" stroke="#c2923c" stroke-width=".9" stroke-linejoin="round"/><g><path d="M10.4 10.2h4.6v4.6c0 1.100-4.600 1.100-4.600 0z" fill="#f9b63e" stroke="#c47c10" stroke-width=".9"/><path d="M11.600 11.500v3.600" stroke="#fde9b0" stroke-width="1"/><ellipse cx="12.700" cy="10.200" rx="2.300" ry="1" fill="#fde7a8" stroke="#c47c10" stroke-width=".8"/></g></svg>
<span class="t " style="left:69px;top:361px;height:18px;line-height:18px;font-size:12px;color:#000;letter-spacing:0.283px;">bitcamp</span>
<svg class="b" style="left:17.5px;top:384.7px;" width="12" height="8" viewBox="0 0 12 8"><path d="M1.200 1.500L6 6.300 10.800 1.500" fill="none" stroke="#3c3c3c" stroke-width="1.600"/></svg>
<svg class="b" style="left:32px;top:380px;" width="16" height="16" viewBox="0 0 16 16"><path d="M1.2 13.200V3.800c0-.5.300-.8.800-.8h4.200l1.300 1.800h4.700c.5 0 .8.300.8.800v2" fill="#fdf3d2" stroke="#c2923c" stroke-width=".9"/><path d="M1.200 14.500l2.500-6.600c.1-.4.400-.6.800-.6h10.400c.5 0 .7.300.5.800l-2.200 5.900c-.1.300-.4.500-.8.500z" fill="#fbe3a0" stroke="#c2923c" stroke-width=".9" stroke-linejoin="round"/><g><path d="M10.4 10.2h4.6v4.6c0 1.100-4.600 1.100-4.600 0z" fill="#f9b63e" stroke="#c47c10" stroke-width=".9"/><path d="M11.600 11.500v3.600" stroke="#fde9b0" stroke-width="1"/><ellipse cx="12.700" cy="10.200" rx="2.300" ry="1" fill="#fde7a8" stroke="#c47c10" stroke-width=".8"/></g><g><path d="M3.3 8.200l3.400 7H-.1z" fill="#f9d24a" stroke="#b8860b" stroke-width=".8" stroke-linejoin="round"/><rect x="2.900" y="10.600" width=".9" height="2.400" fill="#333"/><rect x="2.900" y="13.400" width=".9" height=".9" fill="#333"/></g></svg>
<span class="t " style="left:51.5px;top:379px;height:18px;line-height:18px;font-size:11px;color:#a39676;">&gt;</span>
<span class="t " style="left:65px;top:379px;height:18px;line-height:18px;font-size:12px;color:#000;letter-spacing:-0.005px;">webapp</span>
<svg class="b" style="left:35.5px;top:401px;" width="8" height="12" viewBox="0 0 8 12"><path d="M2 1.500L6.300 6 2 10.500" fill="none" stroke="#9c9c9c" stroke-width="1.500"/></svg>
<svg class="b" style="left:48px;top:398px;" width="16" height="16" viewBox="0 0 16 16"><path d="M1.2 13.200V3.800c0-.5.300-.8.800-.8h4.200l1.300 1.800h4.700c.5 0 .8.300.8.800v2" fill="#fdf3d2" stroke="#c2923c" stroke-width=".9"/><path d="M1.200 14.500l2.500-6.600c.1-.4.400-.6.800-.6h10.400c.5 0 .7.300.5.800l-2.200 5.900c-.1.300-.4.500-.8.500z" fill="#fbe3a0" stroke="#c2923c" stroke-width=".9" stroke-linejoin="round"/><g><path d="M10.4 10.2h4.6v4.6c0 1.100-4.600 1.100-4.600 0z" fill="#f9b63e" stroke="#c47c10" stroke-width=".9"/><path d="M11.600 11.500v3.600" stroke="#fde9b0" stroke-width="1"/><ellipse cx="12.700" cy="10.200" rx="2.300" ry="1" fill="#fde7a8" stroke="#c47c10" stroke-width=".8"/></g></svg>
<span class="t " style="left:69px;top:397px;height:18px;line-height:18px;font-size:12px;color:#000;letter-spacing:-0.068px;">files</span>
<svg class="b" style="left:33.5px;top:420.7px;" width="12" height="8" viewBox="0 0 12 8"><path d="M1.200 1.500L6 6.300 10.800 1.500" fill="none" stroke="#3c3c3c" stroke-width="1.600"/></svg>
<svg class="b" style="left:48px;top:416px;" width="16" height="16" viewBox="0 0 16 16"><path d="M1.2 13.200V3.800c0-.5.300-.8.800-.8h4.200l1.300 1.800h4.700c.5 0 .8.300.8.800v2" fill="#fdf3d2" stroke="#c2923c" stroke-width=".9"/><path d="M1.200 14.500l2.500-6.600c.1-.4.400-.6.800-.6h10.400c.5 0 .7.300.5.800l-2.200 5.900c-.1.300-.4.500-.8.500z" fill="#fbe3a0" stroke="#c2923c" stroke-width=".9" stroke-linejoin="round"/><g><path d="M10.4 10.2h4.6v4.6c0 1.100-4.600 1.100-4.600 0z" fill="#f9b63e" stroke="#c47c10" stroke-width=".9"/><path d="M11.600 11.500v3.600" stroke="#fde9b0" stroke-width="1"/><ellipse cx="12.700" cy="10.200" rx="2.300" ry="1" fill="#fde7a8" stroke="#c47c10" stroke-width=".8"/></g><g><path d="M3.3 8.200l3.400 7H-.1z" fill="#f9d24a" stroke="#b8860b" stroke-width=".8" stroke-linejoin="round"/><rect x="2.900" y="10.600" width=".9" height="2.400" fill="#333"/><rect x="2.900" y="13.400" width=".9" height=".9" fill="#333"/></g></svg>
<span class="t " style="left:67.5px;top:415px;height:18px;line-height:18px;font-size:11px;color:#a39676;">&gt;</span>
<span class="t " style="left:81px;top:415px;height:18px;line-height:18px;font-size:12px;color:#000;letter-spacing:0.332px;">html</span>
<svg class="b" style="left:51.5px;top:437px;" width="8" height="12" viewBox="0 0 8 12"><path d="M2 1.500L6.300 6 2 10.500" fill="none" stroke="#9c9c9c" stroke-width="1.500"/></svg>
<svg class="b" style="left:64px;top:434px;" width="16" height="16" viewBox="0 0 16 16"><path d="M1.2 13.200V3.800c0-.5.300-.8.800-.8h4.200l1.300 1.800h4.700c.5 0 .8.300.8.800v2" fill="#fdf3d2" stroke="#c2923c" stroke-width=".9"/><path d="M1.200 14.500l2.500-6.600c.1-.4.400-.6.800-.6h10.400c.5 0 .7.300.5.800l-2.200 5.900c-.1.300-.4.500-.8.500z" fill="#fbe3a0" stroke="#c2923c" stroke-width=".9" stroke-linejoin="round"/><g><path d="M10.4 10.2h4.6v4.6c0 1.100-4.600 1.100-4.600 0z" fill="#f9b63e" stroke="#c47c10" stroke-width=".9"/><path d="M11.600 11.500v3.600" stroke="#fde9b0" stroke-width="1"/><ellipse cx="12.700" cy="10.200" rx="2.300" ry="1" fill="#fde7a8" stroke="#c47c10" stroke-width=".8"/></g></svg>
<span class="t " style="left:85px;top:433px;height:18px;line-height:18px;font-size:12px;color:#000;letter-spacing:-0.667px;">css</span>
<svg class="b" style="left:49.5px;top:456.7px;" width="12" height="8" viewBox="0 0 12 8"><path d="M1.200 1.500L6 6.300 10.800 1.500" fill="none" stroke="#3c3c3c" stroke-width="1.600"/></svg>
<svg class="b" style="left:64px;top:452px;" width="16" height="16" viewBox="0 0 16 16"><path d="M1.2 13.200V3.800c0-.5.300-.8.800-.8h4.200l1.300 1.800h4.700c.5 0 .8.300.8.800v2" fill="#fdf3d2" stroke="#c2923c" stroke-width=".9"/><path d="M1.200 14.500l2.500-6.600c.1-.4.400-.6.800-.6h10.400c.5 0 .7.300.5.800l-2.200 5.900c-.1.300-.4.500-.8.500z" fill="#fbe3a0" stroke="#c2923c" stroke-width=".9" stroke-linejoin="round"/><g><path d="M10.4 10.2h4.6v4.6c0 1.100-4.600 1.100-4.600 0z" fill="#f9b63e" stroke="#c47c10" stroke-width=".9"/><path d="M11.600 11.500v3.600" stroke="#fde9b0" stroke-width="1"/><ellipse cx="12.700" cy="10.200" rx="2.300" ry="1" fill="#fde7a8" stroke="#c47c10" stroke-width=".8"/></g></svg>
<span class="t " style="left:85px;top:451px;height:18px;line-height:18px;font-size:12px;color:#000;letter-spacing:-0.333px;">js</span>
<svg class="b" style="left:67.5px;top:473px;" width="8" height="12" viewBox="0 0 8 12"><path d="M2 1.500L6.300 6 2 10.500" fill="none" stroke="#9c9c9c" stroke-width="1.500"/></svg>
<svg class="b" style="left:80px;top:470px;" width="16" height="16" viewBox="0 0 16 16"><path d="M3.500 1.500h6.500l3.500 3.500v9.500h-10z" fill="#fdfdfb" stroke="#a98b45" stroke-width="1" stroke-linejoin="round"/><path d="M4 11h9v3.500H4z" fill="#e6eefa"/><path d="M10 1.500V5h3.500" fill="#f3e4b5" stroke="#a98b45" stroke-width=".8"/><g fill="none" stroke="#2a5fa0" stroke-width="1.200"><path d="M5.600 8.500V4.600h2.400V9.300"/><path d="M5.600 8.600h2.400"/><path d="M11.400 8.300c-1.500-.9-2.900.3-1.500 1.300 1.300.9.600 2.500-1.700 1.600"/></g><g><path d="M10.4 10.2h4.6v4.6c0 1.100-4.600 1.100-4.600 0z" fill="#f9b63e" stroke="#c47c10" stroke-width=".9"/><path d="M11.600 11.500v3.600" stroke="#fde9b0" stroke-width="1"/><ellipse cx="12.700" cy="10.200" rx="2.300" ry="1" fill="#fde7a8" stroke="#c47c10" stroke-width=".8"/></g></svg>
<span class="t " style="left:101px;top:469px;height:18px;line-height:18px;font-size:12px;color:#000;letter-spacing:0.221px;">common.js</span>
<svg class="b" style="left:67.5px;top:491px;" width="8" height="12" viewBox="0 0 8 12"><path d="M2 1.500L6.300 6 2 10.500" fill="none" stroke="#9c9c9c" stroke-width="1.500"/></svg>
<svg class="b" style="left:80px;top:488px;" width="16" height="16" viewBox="0 0 16 16"><path d="M3.500 1.500h6.500l3.500 3.500v9.500h-10z" fill="#fdfdfb" stroke="#a98b45" stroke-width="1" stroke-linejoin="round"/><path d="M4 11h9v3.500H4z" fill="#e6eefa"/><path d="M10 1.500V5h3.500" fill="#f3e4b5" stroke="#a98b45" stroke-width=".8"/><g fill="none" stroke="#2a5fa0" stroke-width="1.200"><path d="M5.600 8.500V4.600h2.400V9.300"/><path d="M5.600 8.600h2.400"/><path d="M11.400 8.300c-1.500-.9-2.900.3-1.500 1.300 1.300.9.600 2.500-1.700 1.600"/></g><g><path d="M10.4 10.2h4.6v4.6c0 1.100-4.600 1.100-4.600 0z" fill="#f9b63e" stroke="#c47c10" stroke-width=".9"/><path d="M11.600 11.500v3.600" stroke="#fde9b0" stroke-width="1"/><ellipse cx="12.700" cy="10.200" rx="2.300" ry="1" fill="#fde7a8" stroke="#c47c10" stroke-width=".8"/></g></svg>
<span class="t " style="left:101px;top:487px;height:18px;line-height:18px;font-size:12px;color:#000;letter-spacing:0.092px;">jquery.bit.js</span>
<svg class="b" style="left:67.5px;top:509px;" width="8" height="12" viewBox="0 0 8 12"><path d="M2 1.500L6.300 6 2 10.500" fill="none" stroke="#9c9c9c" stroke-width="1.500"/></svg>
<svg class="b" style="left:80px;top:506px;" width="16" height="16" viewBox="0 0 16 16"><path d="M3.500 1.500h6.500l3.500 3.500v9.500h-10z" fill="#fdfdfb" stroke="#a98b45" stroke-width="1" stroke-linejoin="round"/><path d="M4 11h9v3.500H4z" fill="#e6eefa"/><path d="M10 1.500V5h3.500" fill="#f3e4b5" stroke="#a98b45" stroke-width=".8"/><g fill="none" stroke="#2a5fa0" stroke-width="1.200"><path d="M5.600 8.500V4.600h2.400V9.300"/><path d="M5.600 8.600h2.400"/><path d="M11.400 8.300c-1.500-.9-2.900.3-1.500 1.300 1.300.9.600 2.500-1.700 1.600"/></g><g><path d="M10.4 10.2h4.6v4.6c0 1.100-4.600 1.100-4.600 0z" fill="#f9b63e" stroke="#c47c10" stroke-width=".9"/><path d="M11.600 11.500v3.600" stroke="#fde9b0" stroke-width="1"/><ellipse cx="12.700" cy="10.200" rx="2.300" ry="1" fill="#fde7a8" stroke="#c47c10" stroke-width=".8"/></g></svg>
<span class="t " style="left:101px;top:505px;height:18px;line-height:18px;font-size:12px;color:#000;letter-spacing:-0.124px;">loaduser.js</span>
<svg class="b" style="left:67.5px;top:527px;" width="8" height="12" viewBox="0 0 8 12"><path d="M2 1.500L6.300 6 2 10.500" fill="none" stroke="#9c9c9c" stroke-width="1.500"/></svg>
<svg class="b" style="left:80px;top:524px;" width="16" height="16" viewBox="0 0 16 16"><path d="M3.500 1.500h6.500l3.500 3.500v9.500h-10z" fill="#fdfdfb" stroke="#a98b45" stroke-width="1" stroke-linejoin="round"/><path d="M4 11h9v3.500H4z" fill="#e6eefa"/><path d="M10 1.500V5h3.500" fill="#f3e4b5" stroke="#a98b45" stroke-width=".8"/><g fill="none" stroke="#2a5fa0" stroke-width="1.200"><path d="M5.600 8.500V4.600h2.400V9.300"/><path d="M5.600 8.600h2.400"/><path d="M11.400 8.300c-1.500-.9-2.900.3-1.500 1.300 1.300.9.600 2.500-1.700 1.600"/></g><g><path d="M10.4 10.2h4.6v4.6c0 1.100-4.600 1.100-4.600 0z" fill="#f9b63e" stroke="#c47c10" stroke-width=".9"/><path d="M11.600 11.500v3.600" stroke="#fde9b0" stroke-width="1"/><ellipse cx="12.700" cy="10.200" rx="2.300" ry="1" fill="#fde7a8" stroke="#c47c10" stroke-width=".8"/></g></svg>
<span class="t " style="left:101px;top:523px;height:18px;line-height:18px;font-size:12px;color:#000;letter-spacing:0.145px;">logout.js</span>
<svg class="b" style="left:49.5px;top:546.7px;" width="12" height="8" viewBox="0 0 12 8"><path d="M1.200 1.500L6 6.300 10.800 1.500" fill="none" stroke="#3c3c3c" stroke-width="1.600"/></svg>
<svg class="b" style="left:64px;top:542px;" width="16" height="16" viewBox="0 0 16 16"><path d="M1.2 13.200V3.800c0-.5.300-.8.800-.8h4.200l1.300 1.800h4.700c.5 0 .8.300.8.800v2" fill="#fdf3d2" stroke="#c2923c" stroke-width=".9"/><path d="M1.200 14.500l2.500-6.600c.1-.4.400-.6.800-.6h10.400c.5 0 .7.300.5.800l-2.200 5.900c-.1.300-.4.500-.8.500z" fill="#fbe3a0" stroke="#c2923c" stroke-width=".9" stroke-linejoin="round"/><g><path d="M10.4 10.2h4.6v4.6c0 1.100-4.600 1.100-4.600 0z" fill="#f9b63e" stroke="#c47c10" stroke-width=".9"/><path d="M11.600 11.500v3.600" stroke="#fde9b0" stroke-width="1"/><ellipse cx="12.700" cy="10.200" rx="2.300" ry="1" fill="#fde7a8" stroke="#c47c10" stroke-width=".8"/></g><g><path d="M3.3 8.200l3.400 7H-.1z" fill="#f9d24a" stroke="#b8860b" stroke-width=".8" stroke-linejoin="round"/><rect x="2.900" y="10.600" width=".9" height="2.400" fill="#333"/><rect x="2.900" y="13.400" width=".9" height=".9" fill="#333"/></g></svg>
<span class="t " style="left:85px;top:541px;height:18px;line-height:18px;font-size:12px;color:#000;letter-spacing:-0.146px;">Lecture</span>
<svg class="b" style="left:80px;top:560px;" width="16" height="16" viewBox="0 0 16 16"><path d="M3.500 1.500h6.500l3.500 3.500v9.500h-10z" fill="#fdfdfb" stroke="#a98b45" stroke-width="1" stroke-linejoin="round"/><path d="M4 11h9v3.500H4z" fill="#e6eefa"/><path d="M10 1.500V5h3.500" fill="#f3e4b5" stroke="#a98b45" stroke-width=".8"/><g stroke-width="1.100"><path d="M5.200 5.500h4" stroke="#ee5a5a"/><path d="M5.200 7.500h4" stroke="#7a8fb8"/><path d="M10.200 7.500h1" stroke="#4a5f98"/><path d="M5.200 9.500h2" stroke="#ee5a5a"/><path d="M8.200 9.500h3" stroke="#3a4f88"/><path d="M5.200 11.600h6" stroke="#3a9a4a"/></g><g><path d="M10.4 10.2h4.6v4.6c0 1.100-4.600 1.100-4.600 0z" fill="#f9b63e" stroke="#c47c10" stroke-width=".9"/><path d="M11.600 11.500v3.600" stroke="#fde9b0" stroke-width="1"/><ellipse cx="12.700" cy="10.200" rx="2.300" ry="1" fill="#fde7a8" stroke="#c47c10" stroke-width=".8"/></g></svg>
<span class="t " style="left:101px;top:559px;height:18px;line-height:18px;font-size:12px;color:#000;letter-spacing:0.227px;">lectureinfo.html</span>
<svg class="b" style="left:67.5px;top:581px;" width="8" height="12" viewBox="0 0 8 12"><path d="M2 1.500L6.300 6 2 10.500" fill="none" stroke="#9c9c9c" stroke-width="1.500"/></svg>
<svg class="b" style="left:80px;top:578px;" width="16" height="16" viewBox="0 0 16 16"><path d="M3.500 1.500h6.500l3.500 3.500v9.500h-10z" fill="#fdfdfb" stroke="#a98b45" stroke-width="1" stroke-linejoin="round"/><path d="M4 11h9v3.500H4z" fill="#e6eefa"/><path d="M10 1.500V5h3.500" fill="#f3e4b5" stroke="#a98b45" stroke-width=".8"/><g fill="none" stroke="#2a5fa0" stroke-width="1.200"><path d="M5.600 8.500V4.600h2.400V9.300"/><path d="M5.600 8.600h2.400"/><path d="M11.400 8.300c-1.500-.9-2.900.3-1.500 1.300 1.300.9.600 2.500-1.700 1.600"/></g><g><path d="M10.4 10.2h4.6v4.6c0 1.100-4.600 1.100-4.600 0z" fill="#f9b63e" stroke="#c47c10" stroke-width=".9"/><path d="M11.600 11.500v3.600" stroke="#fde9b0" stroke-width="1"/><ellipse cx="12.700" cy="10.200" rx="2.300" ry="1" fill="#fde7a8" stroke="#c47c10" stroke-width=".8"/></g></svg>
<span class="t " style="left:101px;top:577px;height:18px;line-height:18px;font-size:12px;color:#000;letter-spacing:0.045px;">lectureinfo.js</span>
<svg class="b" style="left:80px;top:596px;" width="16" height="16" viewBox="0 0 16 16"><path d="M3.500 1.500h6.500l3.500 3.500v9.500h-10z" fill="#fdfdfb" stroke="#a98b45" stroke-width="1" stroke-linejoin="round"/><path d="M4 11h9v3.500H4z" fill="#e6eefa"/><path d="M10 1.500V5h3.500" fill="#f3e4b5" stroke="#a98b45" stroke-width=".8"/><g stroke-width="1.100"><path d="M5.200 5.500h4" stroke="#ee5a5a"/><path d="M5.200 7.500h4" stroke="#7a8fb8"/><path d="M10.200 7.500h1" stroke="#4a5f98"/><path d="M5.200 9.500h2" stroke="#ee5a5a"/><path d="M8.200 9.500h3" stroke="#3a4f88"/><path d="M5.200 11.600h6" stroke="#3a9a4a"/></g><g><path d="M10.4 10.2h4.6v4.6c0 1.100-4.600 1.100-4.600 0z" fill="#f9b63e" stroke="#c47c10" stroke-width=".9"/><path d="M11.600 11.500v3.600" stroke="#fde9b0" stroke-width="1"/><ellipse cx="12.700" cy="10.200" rx="2.300" ry="1" fill="#fde7a8" stroke="#c47c10" stroke-width=".8"/></g><g><path d="M3.3 8.200l3.400 7H-.1z" fill="#f9d24a" stroke="#b8860b" stroke-width=".8" stroke-linejoin="round"/><rect x="2.900" y="10.600" width=".9" height="2.400" fill="#333"/><rect x="2.900" y="13.400" width=".9" height=".9" fill="#333"/></g></svg>
<span class="t " style="left:101px;top:595px;height:18px;line-height:18px;font-size:12px;color:#000;letter-spacing:0.126px;">lectureupdate.html</span>
<svg class="b" style="left:80px;top:614px;" width="16" height="16" viewBox="0 0 16 16"><path d="M3.500 1.500h6.500l3.500 3.500v9.500h-10z" fill="#fdfdfb" stroke="#a98b45" stroke-width="1" stroke-linejoin="round"/><path d="M4 11h9v3.500H4z" fill="#e6eefa"/><path d="M10 1.500V5h3.500" fill="#f3e4b5" stroke="#a98b45" stroke-width=".8"/><g stroke-width="1.100"><path d="M5.200 5.500h4" stroke="#ee5a5a"/><path d="M5.200 7.500h4" stroke="#7a8fb8"/><path d="M10.200 7.500h1" stroke="#4a5f98"/><path d="M5.200 9.500h2" stroke="#ee5a5a"/><path d="M8.200 9.500h3" stroke="#3a4f88"/><path d="M5.200 11.600h6" stroke="#3a9a4a"/></g><g><path d="M10.4 10.2h4.6v4.6c0 1.100-4.600 1.100-4.600 0z" fill="#f9b63e" stroke="#c47c10" stroke-width=".9"/><path d="M11.600 11.500v3.600" stroke="#fde9b0" stroke-width="1"/><ellipse cx="12.700" cy="10.200" rx="2.300" ry="1" fill="#fde7a8" stroke="#c47c10" stroke-width=".8"/></g></svg>
<span class="t " style="left:101px;top:613px;height:18px;line-height:18px;font-size:12px;color:#000;letter-spacing:0.259px;">list.html</span>
<svg class="b" style="left:67.5px;top:635px;" width="8" height="12" viewBox="0 0 8 12"><path d="M2 1.500L6.300 6 2 10.500" fill="none" stroke="#9c9c9c" stroke-width="1.500"/></svg>
<svg class="b" style="left:80px;top:632px;" width="16" height="16" viewBox="0 0 16 16"><path d="M3.500 1.500h6.500l3.500 3.500v9.500h-10z" fill="#fdfdfb" stroke="#a98b45" stroke-width="1" stroke-linejoin="round"/><path d="M4 11h9v3.500H4z" fill="#e6eefa"/><path d="M10 1.500V5h3.500" fill="#f3e4b5" stroke="#a98b45" stroke-width=".8"/><g fill="none" stroke="#2a5fa0" stroke-width="1.200"><path d="M5.600 8.500V4.600h2.400V9.300"/><path d="M5.600 8.600h2.400"/><path d="M11.400 8.300c-1.500-.9-2.900.3-1.500 1.300 1.300.9.600 2.500-1.700 1.600"/></g><g><path d="M10.4 10.2h4.6v4.6c0 1.100-4.600 1.100-4.600 0z" fill="#f9b63e" stroke="#c47c10" stroke-width=".9"/><path d="M11.600 11.500v3.600" stroke="#fde9b0" stroke-width="1"/><ellipse cx="12.700" cy="10.200" rx="2.300" ry="1" fill="#fde7a8" stroke="#c47c10" stroke-width=".8"/></g></svg>
<span class="t " style="left:101px;top:631px;height:18px;line-height:18px;font-size:12px;color:#000;letter-spacing:-0.095px;">list.js</span>
<svg class="b" style="left:49.5px;top:654.7px;" width="12" height="8" viewBox="0 0 12 8"><path d="M1.200 1.500L6 6.300 10.800 1.500" fill="none" stroke="#3c3c3c" stroke-width="1.600"/></svg>
<svg class="b" style="left:64px;top:650px;" width="16" height="16" viewBox="0 0 16 16"><path d="M1.2 13.200V3.800c0-.5.300-.8.800-.8h4.200l1.300 1.800h4.700c.5 0 .8.300.8.800v2" fill="#fdf3d2" stroke="#c2923c" stroke-width=".9"/><path d="M1.200 14.500l2.500-6.600c.1-.4.400-.6.800-.6h10.400c.5 0 .7.300.5.800l-2.200 5.900c-.1.300-.4.500-.8.500z" fill="#fbe3a0" stroke="#c2923c" stroke-width=".9" stroke-linejoin="round"/><g><path d="M10.4 10.2h4.6v4.6c0 1.100-4.600 1.100-4.600 0z" fill="#f9b63e" stroke="#c47c10" stroke-width=".9"/><path d="M11.600 11.500v3.600" stroke="#fde9b0" stroke-width="1"/><ellipse cx="12.700" cy="10.200" rx="2.300" ry="1" fill="#fde7a8" stroke="#c47c10" stroke-width=".8"/></g></svg>
<span class="t " style="left:85px;top:649px;height:18px;line-height:18px;font-size:12px;color:#000;letter-spacing:-0.261px;">Professor</span>
<svg class="b" style="left:80px;top:668px;" width="16" height="16" viewBox="0 0 16 16"><path d="M3.500 1.500h6.500l3.500 3.500v9.500h-10z" fill="#fdfdfb" stroke="#a98b45" stroke-width="1" stroke-linejoin="round"/><path d="M4 11h9v3.500H4z" fill="#e6eefa"/><path d="M10 1.500V5h3.500" fill="#f3e4b5" stroke="#a98b45" stroke-width=".8"/><g stroke-width="1.100"><path d="M5.200 5.500h4" stroke="#ee5a5a"/><path d="M5.200 7.500h4" stroke="#7a8fb8"/><path d="M10.200 7.500h1" stroke="#4a5f98"/><path d="M5.200 9.500h2" stroke="#ee5a5a"/><path d="M8.200 9.500h3" stroke="#3a4f88"/><path d="M5.200 11.600h6" stroke="#3a9a4a"/></g><g><path d="M10.4 10.2h4.6v4.6c0 1.100-4.600 1.100-4.600 0z" fill="#f9b63e" stroke="#c47c10" stroke-width=".9"/><path d="M11.600 11.500v3.600" stroke="#fde9b0" stroke-width="1"/><ellipse cx="12.700" cy="10.200" rx="2.300" ry="1" fill="#fde7a8" stroke="#c47c10" stroke-width=".8"/></g></svg>
<span class="t " style="left:101px;top:667px;height:18px;line-height:18px;font-size:12px;color:#000;letter-spacing:0.213px;">mylecture.html</span>
<svg class="b" style="left:67.5px;top:689px;" width="8" height="12" viewBox="0 0 8 12"><path d="M2 1.500L6.300 6 2 10.500" fill="none" stroke="#9c9c9c" stroke-width="1.500"/></svg>
<svg class="b" style="left:80px;top:686px;" width="16" height="16" viewBox="0 0 16 16"><path d="M3.500 1.500h6.500l3.500 3.500v9.500h-10z" fill="#fdfdfb" stroke="#a98b45" stroke-width="1" stroke-linejoin="round"/><path d="M4 11h9v3.500H4z" fill="#e6eefa"/><path d="M10 1.500V5h3.500" fill="#f3e4b5" stroke="#a98b45" stroke-width=".8"/><g fill="none" stroke="#2a5fa0" stroke-width="1.200"><path d="M5.600 8.500V4.600h2.400V9.300"/><path d="M5.600 8.600h2.400"/><path d="M11.400 8.300c-1.500-.9-2.900.3-1.500 1.300 1.300.9.600 2.500-1.700 1.600"/></g><g><path d="M10.4 10.2h4.6v4.6c0 1.100-4.600 1.100-4.600 0z" fill="#f9b63e" stroke="#c47c10" stroke-width=".9"/><path d="M11.600 11.500v3.600" stroke="#fde9b0" stroke-width="1"/><ellipse cx="12.700" cy="10.200" rx="2.300" ry="1" fill="#fde7a8" stroke="#c47c10" stroke-width=".8"/></g></svg>
<span class="t " style="left:101px;top:685px;height:18px;line-height:18px;font-size:12px;color:#000;letter-spacing:-0.001px;">mylecture.js</span>
<svg class="b" style="left:80px;top:704px;" width="16" height="16" viewBox="0 0 16 16"><path d="M3.500 1.500h6.500l3.500 3.500v9.500h-10z" fill="#fdfdfb" stroke="#a98b45" stroke-width="1" stroke-linejoin="round"/><path d="M4 11h9v3.500H4z" fill="#e6eefa"/><path d="M10 1.500V5h3.500" fill="#f3e4b5" stroke="#a98b45" stroke-width=".8"/><g stroke-width="1.100"><path d="M5.200 5.500h4" stroke="#ee5a5a"/><path d="M5.200 7.500h4" stroke="#7a8fb8"/><path d="M10.200 7.500h1" stroke="#4a5f98"/><path d="M5.200 9.500h2" stroke="#ee5a5a"/><path d="M8.200 9.500h3" stroke="#3a4f88"/><path d="M5.200 11.600h6" stroke="#3a9a4a"/></g><g><path d="M10.4 10.2h4.6v4.6c0 1.100-4.600 1.100-4.600 0z" fill="#f9b63e" stroke="#c47c10" stroke-width=".9"/><path d="M11.600 11.500v3.600" stroke="#fde9b0" stroke-width="1"/><ellipse cx="12.700" cy="10.200" rx="2.300" ry="1" fill="#fde7a8" stroke="#c47c10" stroke-width=".8"/></g></svg>
<span class="t " style="left:101px;top:703px;height:18px;line-height:18px;font-size:12px;color:#000;letter-spacing:0.146px;">professorinfo.html</span>
<svg class="b" style="left:49.5px;top:726.7px;" width="12" height="8" viewBox="0 0 12 8"><path d="M1.200 1.500L6 6.300 10.800 1.500" fill="none" stroke="#3c3c3c" stroke-width="1.600"/></svg>
<svg class="b" style="left:64px;top:722px;" width="16" height="16" viewBox="0 0 16 16"><path d="M1.2 13.200V3.800c0-.5.300-.8.800-.8h4.200l1.300 1.800h4.700c.5 0 .8.300.8.800v2" fill="#fdf3d2" stroke="#c2923c" stroke-width=".9"/><path d="M1.200 14.500l2.500-6.600c.1-.4.400-.6.800-.6h10.400c.5 0 .7.300.5.800l-2.200 5.900c-.1.300-.4.500-.8.500z" fill="#fbe3a0" stroke="#c2923c" stroke-width=".9" stroke-linejoin="round"/><g><path d="M10.4 10.2h4.6v4.6c0 1.100-4.600 1.100-4.600 0z" fill="#f9b63e" stroke="#c47c10" stroke-width=".9"/><path d="M11.600 11.500v3.600" stroke="#fde9b0" stroke-width="1"/><ellipse cx="12.700" cy="10.200" rx="2.300" ry="1" fill="#fde7a8" stroke="#c47c10" stroke-width=".8"/></g></svg>
<span class="t " style="left:83.5px;top:721px;height:18px;line-height:18px;font-size:11px;color:#a39676;">&gt;</span>
<span class="t " style="left:97px;top:721px;height:18px;line-height:18px;font-size:12px;color:#000;letter-spacing:0.090px;">Student</span>
<svg class="b" style="left:80px;top:740px;" width="16" height="16" viewBox="0 0 16 16"><path d="M3.500 1.500h6.500l3.500 3.500v9.500h-10z" fill="#fdfdfb" stroke="#a98b45" stroke-width="1" stroke-linejoin="round"/><path d="M4 11h9v3.500H4z" fill="#e6eefa"/><path d="M10 1.500V5h3.500" fill="#f3e4b5" stroke="#a98b45" stroke-width=".8"/><g stroke-width="1.100"><path d="M5.200 5.500h4" stroke="#ee5a5a"/><path d="M5.200 7.500h4" stroke="#7a8fb8"/><path d="M10.200 7.500h1" stroke="#4a5f98"/><path d="M5.200 9.500h2" stroke="#ee5a5a"/><path d="M8.200 9.500h3" stroke="#3a4f88"/><path d="M5.200 11.600h6" stroke="#3a9a4a"/></g><g><path d="M10.4 10.2h4.6v4.6c0 1.100-4.600 1.100-4.600 0z" fill="#f9b63e" stroke="#c47c10" stroke-width=".9"/><path d="M11.600 11.500v3.600" stroke="#fde9b0" stroke-width="1"/><ellipse cx="12.700" cy="10.200" rx="2.300" ry="1" fill="#fde7a8" stroke="#c47c10" stroke-width=".8"/></g></svg>
<span class="t " style="left:101px;top:739px;height:18px;line-height:18px;font-size:12px;color:#000;letter-spacing:0.055px;">myclass.html</span>
<svg class="b" style="left:67.5px;top:761px;" width="8" height="12" viewBox="0 0 8 12"><path d="M2 1.500L6.300 6 2 10.500" fill="none" stroke="#9c9c9c" stroke-width="1.500"/></svg>
<svg class="b" style="left:80px;top:758px;" width="16" height="16" viewBox="0 0 16 16"><path d="M3.500 1.500h6.500l3.500 3.500v9.500h-10z" fill="#fdfdfb" stroke="#a98b45" stroke-width="1" stroke-linejoin="round"/><path d="M4 11h9v3.500H4z" fill="#e6eefa"/><path d="M10 1.500V5h3.500" fill="#f3e4b5" stroke="#a98b45" stroke-width=".8"/><g fill="none" stroke="#2a5fa0" stroke-width="1.200"><path d="M5.600 8.500V4.600h2.400V9.300"/><path d="M5.600 8.600h2.400"/><path d="M11.400 8.300c-1.500-.9-2.900.3-1.500 1.300 1.300.9.600 2.500-1.700 1.600"/></g><g><path d="M10.4 10.2h4.6v4.6c0 1.100-4.600 1.100-4.600 0z" fill="#f9b63e" stroke="#c47c10" stroke-width=".9"/><path d="M11.600 11.500v3.600" stroke="#fde9b0" stroke-width="1"/><ellipse cx="12.700" cy="10.200" rx="2.300" ry="1" fill="#fde7a8" stroke="#c47c10" stroke-width=".8"/></g></svg>
<span class="t " style="left:99.5px;top:757px;height:18px;line-height:18px;font-size:11px;color:#a39676;">&gt;</span>
<span class="t " style="left:113px;top:757px;height:18px;line-height:18px;font-size:12px;color:#000;letter-spacing:-0.234px;">myclass.js</span>
<div class="b" style="left:78px;top:775px;width:114px;height:18px;background:#d9d9d9;"></div>
<svg class="b" style="left:80px;top:776px;" width="16" height="16" viewBox="0 0 16 16"><path d="M3.500 1.500h6.500l3.500 3.500v9.500h-10z" fill="#fdfdfb" stroke="#a98b45" stroke-width="1" stroke-linejoin="round"/><path d="M4 11h9v3.500H4z" fill="#e6eefa"/><path d="M10 1.500V5h3.500" fill="#f3e4b5" stroke="#a98b45" stroke-width=".8"/><g stroke-width="1.100"><path d="M5.200 5.500h4" stroke="#ee5a5a"/><path d="M5.200 7.500h4" stroke="#7a8fb8"/><path d="M10.200 7.500h1" stroke="#4a5f98"/><path d="M5.200 9.500h2" stroke="#ee5a5a"/><path d="M8.200 9.500h3" stroke="#3a4f88"/><path d="M5.200 11.600h6" stroke="#3a9a4a"/></g><g><path d="M10.4 10.2h4.6v4.6c0 1.100-4.600 1.100-4.600 0z" fill="#f9b63e" stroke="#c47c10" stroke-width=".9"/><path d="M11.600 11.500v3.600" stroke="#fde9b0" stroke-width="1"/><ellipse cx="12.700" cy="10.200" rx="2.300" ry="1" fill="#fde7a8" stroke="#c47c10" stroke-width=".8"/></g></svg>
<span class="t " style="left:101px;top:775px;height:18px;line-height:18px;font-size:12px;color:#000;letter-spacing:0.268px;">studentinfo.html</span>
<svg class="b" style="left:64px;top:794px;" width="16" height="16" viewBox="0 0 16 16"><path d="M3.500 1.500h6.500l3.500 3.500v9.500h-10z" fill="#fdfdfb" stroke="#a98b45" stroke-width="1" stroke-linejoin="round"/><path d="M4 11h9v3.500H4z" fill="#e6eefa"/><path d="M10 1.500V5h3.500" fill="#f3e4b5" stroke="#a98b45" stroke-width=".8"/><g stroke-width="1.100"><path d="M5.200 5.500h4" stroke="#ee5a5a"/><path d="M5.200 7.500h4" stroke="#7a8fb8"/><path d="M10.200 7.500h1" stroke="#4a5f98"/><path d="M5.200 9.500h2" stroke="#ee5a5a"/><path d="M8.200 9.500h3" stroke="#3a4f88"/><path d="M5.200 11.600h6" stroke="#3a9a4a"/></g><g><path d="M10.4 10.2h4.6v4.6c0 1.100-4.600 1.100-4.600 0z" fill="#f9b63e" stroke="#c47c10" stroke-width=".9"/><path d="M11.600 11.500v3.600" stroke="#fde9b0" stroke-width="1"/><ellipse cx="12.700" cy="10.200" rx="2.300" ry="1" fill="#fde7a8" stroke="#c47c10" stroke-width=".8"/></g></svg>
<span class="t " style="left:85px;top:793px;height:18px;line-height:18px;font-size:12px;color:#000;letter-spacing:0.369px;">join.html</span>
<svg class="b" style="left:64px;top:812px;" width="16" height="16" viewBox="0 0 16 16"><path d="M3.500 1.500h6.500l3.500 3.500v9.500h-10z" fill="#fdfdfb" stroke="#a98b45" stroke-width="1" stroke-linejoin="round"/><path d="M4 11h9v3.500H4z" fill="#e6eefa"/><path d="M10 1.500V5h3.500" fill="#f3e4b5" stroke="#a98b45" stroke-width=".8"/><g stroke-width="1.100"><path d="M5.200 5.500h4" stroke="#ee5a5a"/><path d="M5.200 7.500h4" stroke="#7a8fb8"/><path d="M10.200 7.500h1" stroke="#4a5f98"/><path d="M5.200 9.500h2" stroke="#ee5a5a"/><path d="M8.200 9.500h3" stroke="#3a4f88"/><path d="M5.200 11.600h6" stroke="#3a9a4a"/></g><g><path d="M10.4 10.2h4.6v4.6c0 1.100-4.600 1.100-4.600 0z" fill="#f9b63e" stroke="#c47c10" stroke-width=".9"/><path d="M11.600 11.500v3.600" stroke="#fde9b0" stroke-width="1"/><ellipse cx="12.700" cy="10.200" rx="2.300" ry="1" fill="#fde7a8" stroke="#c47c10" stroke-width=".8"/></g></svg>
<span class="t " style="left:85px;top:811px;height:18px;line-height:18px;font-size:12px;color:#000;letter-spacing:0.364px;">login.html</span>
<svg class="b" style="left:51.5px;top:833px;" width="8" height="12" viewBox="0 0 8 12"><path d="M2 1.500L6.300 6 2 10.500" fill="none" stroke="#9c9c9c" stroke-width="1.500"/></svg>
<svg class="b" style="left:64px;top:830px;" width="16" height="16" viewBox="0 0 16 16"><path d="M3.500 1.500h6.500l3.500 3.500v9.500h-10z" fill="#fdfdfb" stroke="#a98b45" stroke-width="1" stroke-linejoin="round"/><path d="M4 11h9v3.500H4z" fill="#e6eefa"/><path d="M10 1.500V5h3.500" fill="#f3e4b5" stroke="#a98b45" stroke-width=".8"/><g fill="none" stroke="#2a5fa0" stroke-width="1.200"><path d="M5.600 8.500V4.600h2.400V9.300"/><path d="M5.600 8.600h2.400"/><path d="M11.400 8.300c-1.500-.9-2.900.3-1.500 1.300 1.300.9.600 2.500-1.700 1.600"/></g><g><path d="M10.4 10.2h4.6v4.6c0 1.100-4.600 1.100-4.600 0z" fill="#f9b63e" stroke="#c47c10" stroke-width=".9"/><path d="M11.600 11.500v3.600" stroke="#fde9b0" stroke-width="1"/><ellipse cx="12.700" cy="10.200" rx="2.300" ry="1" fill="#fde7a8" stroke="#c47c10" stroke-width=".8"/></g></svg>
<span class="t " style="left:85px;top:829px;height:18px;line-height:18px;font-size:12px;color:#000;letter-spacing:0.081px;">login.js</span>
<svg class="b" style="left:64px;top:848px;" width="16" height="16" viewBox="0 0 16 16"><path d="M3.500 1.500h6.500l3.500 3.500v9.500h-10z" fill="#fdfdfb" stroke="#a98b45" stroke-width="1" stroke-linejoin="round"/><path d="M4 11h9v3.500H4z" fill="#e6eefa"/><path d="M10 1.500V5h3.500" fill="#f3e4b5" stroke="#a98b45" stroke-width=".8"/><path d="M5 6.200l1.400 4 1.400-4M9 7.200h2.400M9 9h2.400" fill="none" stroke="#2a55a8" stroke-width="1.100"/><g><path d="M10.4 10.2h4.6v4.6c0 1.100-4.600 1.100-4.600 0z" fill="#f9b63e" stroke="#c47c10" stroke-width=".9"/><path d="M11.600 11.500v3.600" stroke="#fde9b0" stroke-width="1"/><ellipse cx="12.700" cy="10.200" rx="2.300" ry="1" fill="#fde7a8" stroke="#c47c10" stroke-width=".8"/></g></svg>
<span class="t " style="left:85px;top:847px;height:18px;line-height:18px;font-size:12px;color:#000;letter-spacing:-0.372px;">README.md</span>
<svg class="b" style="left:64px;top:866px;" width="16" height="16" viewBox="0 0 16 16"><path d="M3.500 1.500h6.500l3.500 3.500v9.500h-10z" fill="#fdfdfb" stroke="#a98b45" stroke-width="1" stroke-linejoin="round"/><path d="M4 11h9v3.500H4z" fill="#e6eefa"/><path d="M10 1.500V5h3.500" fill="#f3e4b5" stroke="#a98b45" stroke-width=".8"/><g stroke-width="1.100"><path d="M5.200 5.500h4" stroke="#ee5a5a"/><path d="M5.200 7.500h4" stroke="#7a8fb8"/><path d="M10.200 7.500h1" stroke="#4a5f98"/><path d="M5.200 9.500h2" stroke="#ee5a5a"/><path d="M8.200 9.500h3" stroke="#3a4f88"/><path d="M5.200 11.600h6" stroke="#3a9a4a"/></g><g><path d="M10.4 10.2h4.6v4.6c0 1.100-4.600 1.100-4.600 0z" fill="#f9b63e" stroke="#c47c10" stroke-width=".9"/><path d="M11.600 11.500v3.600" stroke="#fde9b0" stroke-width="1"/><ellipse cx="12.700" cy="10.200" rx="2.300" ry="1" fill="#fde7a8" stroke="#c47c10" stroke-width=".8"/></g><g><path d="M3.3 8.200l3.400 7H-.1z" fill="#f9d24a" stroke="#b8860b" stroke-width=".8" stroke-linejoin="round"/><rect x="2.900" y="10.600" width=".9" height="2.400" fill="#333"/><rect x="2.900" y="13.400" width=".9" height=".9" fill="#333"/></g></svg>
<span class="t " style="left:85px;top:865px;height:18px;line-height:18px;font-size:12px;color:#000;letter-spacing:0.178px;">upload.html</span>
<svg class="b" style="left:35.5px;top:887px;" width="8" height="12" viewBox="0 0 8 12"><path d="M2 1.500L6.300 6 2 10.500" fill="none" stroke="#9c9c9c" stroke-width="1.500"/></svg>
<svg class="b" style="left:48px;top:884px;" width="16" height="16" viewBox="0 0 16 16"><path d="M1.2 13.200V3.800c0-.5.300-.8.800-.8h4.200l1.300 1.800h4.700c.5 0 .8.300.8.800v2" fill="#fdf3d2" stroke="#c2923c" stroke-width=".9"/><path d="M1.200 14.500l2.500-6.600c.1-.4.400-.6.800-.6h10.400c.5 0 .7.300.5.800l-2.200 5.900c-.1.300-.4.500-.8.500z" fill="#fbe3a0" stroke="#c2923c" stroke-width=".9" stroke-linejoin="round"/><g><path d="M3.3 8.200l3.400 7H-.1z" fill="#f9d24a" stroke="#b8860b" stroke-width=".8" stroke-linejoin="round"/><rect x="2.900" y="10.600" width=".9" height="2.400" fill="#333"/><rect x="2.900" y="13.400" width=".9" height=".9" fill="#333"/></g></svg>
<span class="t " style="left:69px;top:883px;height:18px;line-height:18px;font-size:12px;color:#000;letter-spacing:-0.060px;">node_modules</span>
<svg class="b" style="left:35.5px;top:905px;" width="8" height="12" viewBox="0 0 8 12"><path d="M2 1.500L6.300 6 2 10.500" fill="none" stroke="#9c9c9c" stroke-width="1.500"/></svg>
<svg class="b" style="left:48px;top:902px;" width="16" height="16" viewBox="0 0 16 16"><path d="M1.2 13.200V3.800c0-.5.300-.8.800-.8h4.200l1.300 1.800h4.700c.5 0 .8.300.8.800v2" fill="#fdf3d2" stroke="#c2923c" stroke-width=".9"/><path d="M1.200 14.500l2.500-6.600c.1-.4.400-.6.800-.6h10.400c.5 0 .7.300.5.800l-2.200 5.900c-.1.300-.4.500-.8.500z" fill="#fbe3a0" stroke="#c2923c" stroke-width=".9" stroke-linejoin="round"/><g><path d="M10.4 10.2h4.6v4.6c0 1.100-4.600 1.100-4.600 0z" fill="#f9b63e" stroke="#c47c10" stroke-width=".9"/><path d="M11.600 11.500v3.600" stroke="#fde9b0" stroke-width="1"/><ellipse cx="12.700" cy="10.200" rx="2.300" ry="1" fill="#fde7a8" stroke="#c47c10" stroke-width=".8"/></g></svg>
<span class="t " style="left:69px;top:901px;height:18px;line-height:18px;font-size:12px;color:#000;letter-spacing:-0.523px;">WEB-INF</span>
<svg class="b" style="left:35.5px;top:923px;" width="8" height="12" viewBox="0 0 8 12"><path d="M2 1.500L6.300 6 2 10.500" fill="none" stroke="#9c9c9c" stroke-width="1.500"/></svg>
<svg class="b" style="left:48px;top:920px;" width="16" height="16" viewBox="0 0 16 16"><path d="M3.500 1.500h6.500l3.500 3.500v9.500h-10z" fill="#fdfdfb" stroke="#a98b45" stroke-width="1" stroke-linejoin="round"/><path d="M4 11h9v3.500H4z" fill="#e6eefa"/><path d="M10 1.500V5h3.500" fill="#f3e4b5" stroke="#a98b45" stroke-width=".8"/><g fill="none" stroke="#2a5fa0" stroke-width="1.200"><path d="M5.600 8.500V4.600h2.400V9.300"/><path d="M5.600 8.600h2.400"/><path d="M11.400 8.300c-1.500-.9-2.900.3-1.500 1.300 1.300.9.600 2.500-1.700 1.600"/></g><g><path d="M10.4 10.2h4.6v4.6c0 1.100-4.600 1.100-4.600 0z" fill="#f9b63e" stroke="#c47c10" stroke-width=".9"/><path d="M11.600 11.500v3.600" stroke="#fde9b0" stroke-width="1"/><ellipse cx="12.700" cy="10.200" rx="2.300" ry="1" fill="#fde7a8" stroke="#c47c10" stroke-width=".8"/></g></svg>
<span class="t " style="left:69px;top:919px;height:18px;line-height:18px;font-size:12px;color:#000;letter-spacing:-0.170px;">app.js</span>
<svg class="b" style="left:35.5px;top:941px;" width="8" height="12" viewBox="0 0 8 12"><path d="M2 1.500L6.300 6 2 10.500" fill="none" stroke="#9c9c9c" stroke-width="1.500"/></svg>
<svg class="b" style="left:48px;top:938px;" width="16" height="16" viewBox="0 0 16 16"><path d="M3.500 1.500h6.500l3.500 3.500v9.500h-10z" fill="#fdfdfb" stroke="#a98b45" stroke-width="1" stroke-linejoin="round"/><path d="M4 11h9v3.500H4z" fill="#e6eefa"/><path d="M10 1.500V5h3.500" fill="#f3e4b5" stroke="#a98b45" stroke-width=".8"/><g fill="none" stroke="#2a5fa0" stroke-width="1.200"><path d="M5.600 8.500V4.600h2.400V9.300"/><path d="M5.600 8.600h2.400"/><path d="M11.400 8.300c-1.500-.9-2.900.3-1.500 1.300 1.300.9.600 2.500-1.700 1.600"/></g><g><path d="M10.4 10.2h4.6v4.6c0 1.100-4.600 1.100-4.600 0z" fill="#f9b63e" stroke="#c47c10" stroke-width=".9"/><path d="M11.600 11.500v3.600" stroke="#fde9b0" stroke-width="1"/><ellipse cx="12.700" cy="10.200" rx="2.300" ry="1" fill="#fde7a8" stroke="#c47c10" stroke-width=".8"/></g></svg>
<span class="t " style="left:69px;top:937px;height:18px;line-height:18px;font-size:12px;color:#000;letter-spacing:0.072px;">member.js</span>
<div class="b" style="left:203px;top:145px;width:16px;height:808px;background:#f0f0f0;"></div>
<div class="b" style="left:204px;top:299px;width:14px;height:501px;background:#c8c8c8;"></div>
<svg class="b" style="left:205px;top:148px;" width="12" height="10" viewBox="0 0 12 10"><path d="M2 7.500L6 3.500l4 4" fill="none" stroke="#505050" stroke-width="1.800"/></svg>
<svg class="b" style="left:205px;top:939px;" width="12" height="10" viewBox="0 0 12 10"><path d="M2 2.500L6 6.500l4-4" fill="none" stroke="#505050" stroke-width="1.800"/></svg>
<div class="b" style="left:-1px;top:954px;width:204px;height:16px;background:#f0f0f0;"></div>
<div class="b" style="left:-1px;top:955px;width:111px;height:14px;background:#c8c8c8;"></div>
<svg class="b" style="left:189px;top:956px;" width="10" height="12" viewBox="0 0 10 12"><path d="M2.500 2L6.500 6l-4 4" fill="none" stroke="#505050" stroke-width="1.800"/></svg>
<div class="b" style="left:203px;top:953px;width:16px;height:17px;background:#f0f0f0;"></div>
<div class="b" style="left:226px;top:95px;width:1657px;height:673px;background:#ffffff;border-radius:8px 8px 6px 6px;border:1px solid #c6cbdc;border-top-color:#c8c8c4;border-bottom-color:#c8c8c8;"></div>
<div class="b" style="left:227px;top:96px;width:1655px;height:24px;background:#d0dfef;border-radius:7px 7px 0 0;"></div>
<div class="b" style="left:227px;top:120px;width:1655px;height:1px;background:#b5c4d8;"></div>
<div class="b" style="left:868.5px;top:95px;width:103px;height:26px;background:#ffffff;border-radius:8px 8px 0 0;border:1px solid #c2cfe0;border-bottom:none;"></div>
<svg class="b" style="left:231px;top:101px;" width="16" height="16" viewBox="0 0 16 16"><path d="M3.500 1.500h6.500l3.500 3.500v9.500h-10z" fill="#fdfdfb" stroke="#a98b45" stroke-width="1" stroke-linejoin="round"/><path d="M4 11h9v3.500H4z" fill="#e6eefa"/><path d="M10 1.500V5h3.500" fill="#f3e4b5" stroke="#a98b45" stroke-width=".8"/><g stroke-width="1.100"><path d="M5.200 5.500h4" stroke="#ee5a5a"/><path d="M5.200 7.500h4" stroke="#7a8fb8"/><path d="M10.200 7.500h1" stroke="#4a5f98"/><path d="M5.200 9.500h2" stroke="#ee5a5a"/><path d="M8.200 9.500h3" stroke="#3a4f88"/><path d="M5.200 11.600h6" stroke="#3a9a4a"/></g></svg>
<span class="t " style="left:250px;top:100px;height:18px;line-height:18px;font-size:12px;color:#000;letter-spacing:0.364px;">login.html</span>
<svg class="b" style="left:334px;top:101px;" width="16" height="16" viewBox="0 0 16 16"><path d="M3.500 1.500h6.500l3.500 3.500v9.500h-10z" fill="#fdfdfb" stroke="#a98b45" stroke-width="1" stroke-linejoin="round"/><path d="M4 11h9v3.500H4z" fill="#e6eefa"/><path d="M10 1.500V5h3.500" fill="#f3e4b5" stroke="#a98b45" stroke-width=".8"/><g fill="none" stroke="#2a5fa0" stroke-width="1.200"><path d="M5.600 8.500V4.600h2.400V9.300"/><path d="M5.600 8.600h2.400"/><path d="M11.400 8.300c-1.500-.9-2.900.3-1.500 1.300 1.300.9.600 2.500-1.700 1.600"/></g></svg>
<span class="t " style="left:354px;top:100px;height:18px;line-height:18px;font-size:12px;color:#000;letter-spacing:0.169px;">jquery.bit.js</span>
<svg class="b" style="left:445px;top:101px;" width="16" height="16" viewBox="0 0 16 16"><path d="M3.500 1.500h6.500l3.500 3.500v9.500h-10z" fill="#fdfdfb" stroke="#a98b45" stroke-width="1" stroke-linejoin="round"/><path d="M4 11h9v3.500H4z" fill="#e6eefa"/><path d="M10 1.500V5h3.500" fill="#f3e4b5" stroke="#a98b45" stroke-width=".8"/><g fill="none" stroke="#2a5fa0" stroke-width="1.200"><path d="M5.600 8.500V4.600h2.400V9.300"/><path d="M5.600 8.600h2.400"/><path d="M11.400 8.300c-1.500-.9-2.900.3-1.500 1.300 1.300.9.600 2.500-1.700 1.600"/></g></svg>
<span class="t " style="left:465px;top:100px;height:18px;line-height:18px;font-size:12px;color:#000;letter-spacing:-0.124px;">loaduser.js</span>
<svg class="b" style="left:551px;top:101px;" width="16" height="16" viewBox="0 0 16 16"><path d="M3.500 1.500h6.500l3.500 3.500v9.500h-10z" fill="#fdfdfb" stroke="#a98b45" stroke-width="1" stroke-linejoin="round"/><path d="M4 11h9v3.500H4z" fill="#e6eefa"/><path d="M10 1.500V5h3.500" fill="#f3e4b5" stroke="#a98b45" stroke-width=".8"/><g fill="none" stroke="#2a5fa0" stroke-width="1.200"><path d="M5.600 8.500V4.600h2.400V9.300"/><path d="M5.600 8.600h2.400"/><path d="M11.400 8.300c-1.500-.9-2.900.3-1.500 1.300 1.300.9.600 2.500-1.700 1.600"/></g></svg>
<span class="t " style="left:571px;top:100px;height:18px;line-height:18px;font-size:12px;color:#000;letter-spacing:0.145px;">logout.js</span>
<svg class="b" style="left:647px;top:101px;" width="16" height="16" viewBox="0 0 16 16"><path d="M3.500 1.500h6.500l3.500 3.500v9.500h-10z" fill="#fdfdfb" stroke="#a98b45" stroke-width="1" stroke-linejoin="round"/><path d="M4 11h9v3.500H4z" fill="#e6eefa"/><path d="M10 1.500V5h3.500" fill="#f3e4b5" stroke="#a98b45" stroke-width=".8"/><g fill="none" stroke="#2a5fa0" stroke-width="1.200"><path d="M5.600 8.500V4.600h2.400V9.300"/><path d="M5.600 8.600h2.400"/><path d="M11.400 8.300c-1.500-.9-2.900.3-1.500 1.300 1.300.9.600 2.500-1.700 1.600"/></g></svg>
<span class="t " style="left:667px;top:100px;height:18px;line-height:18px;font-size:12px;color:#000;letter-spacing:0.221px;">common.js</span>
<svg class="b" style="left:757px;top:101px;" width="16" height="16" viewBox="0 0 16 16"><path d="M3.500 1.500h6.500l3.500 3.500v9.500h-10z" fill="#fdfdfb" stroke="#a98b45" stroke-width="1" stroke-linejoin="round"/><path d="M4 11h9v3.500H4z" fill="#e6eefa"/><path d="M10 1.500V5h3.500" fill="#f3e4b5" stroke="#a98b45" stroke-width=".8"/><g fill="none" stroke="#2a5fa0" stroke-width="1.200"><path d="M5.600 8.500V4.600h2.400V9.300"/><path d="M5.600 8.600h2.400"/><path d="M11.400 8.300c-1.500-.9-2.900.3-1.500 1.300 1.300.9.600 2.500-1.700 1.600"/></g></svg>
<span class="t " style="left:777px;top:100px;height:18px;line-height:18px;font-size:12px;color:#000;letter-spacing:-0.001px;">mylecture.js</span>
<svg class="b" style="left:871px;top:101px;" width="16" height="16" viewBox="0 0 16 16"><path d="M3.500 1.500h6.500l3.500 3.500v9.500h-10z" fill="#fdfdfb" stroke="#a98b45" stroke-width="1" stroke-linejoin="round"/><path d="M4 11h9v3.500H4z" fill="#e6eefa"/><path d="M10 1.500V5h3.500" fill="#f3e4b5" stroke="#a98b45" stroke-width=".8"/><g fill="none" stroke="#2a5fa0" stroke-width="1.200"><path d="M5.600 8.500V4.600h2.400V9.300"/><path d="M5.600 8.600h2.400"/><path d="M11.400 8.300c-1.500-.9-2.900.3-1.500 1.300 1.300.9.600 2.500-1.700 1.600"/></g></svg>
<span class="t " style="left:891px;top:100px;height:18px;line-height:18px;font-size:12px;color:#000;letter-spacing:-0.234px;">myclass.js</span>
<svg class="b" style="left:951px;top:102px;" width="13" height="13" viewBox="0 0 13 13"><path d="M1.5 1.500h3l2 2.700 2-2.700h3v2.500L9 6.500l2.500 2.500v2.500h-3l-2-2.700-2 2.700h-3V9L4 6.500 1.500 4z" fill="#fff" stroke="#555" stroke-width="1"/></svg>
<svg class="b" style="left:1836px;top:103px;" width="12" height="6" viewBox="0 0 12 6"><rect x=".5" y=".5" width="10" height="3.200" fill="#fff" stroke="#444" stroke-width="1"/></svg>
<svg class="b" style="left:1858.5px;top:102.5px;" width="12" height="12" viewBox="0 0 12 12"><rect x=".5" y=".5" width="10" height="10" fill="#fff" stroke="#444" stroke-width="1"/><path d="M.5 2.500h10" stroke="#444" stroke-width="1.200"/></svg>
<div class="b" style="left:229px;top:122px;width:12px;height:626px;background:#f5f5f5;"></div>
<div class="b" style="left:264px;top:121px;width:1px;height:627px;background:#f2f2f2;"></div>
<div class="b" style="left:267px;top:663px;width:1584px;height:15px;background:#e8f2fe;"></div>
<div class="b" style="left:1851px;top:121px;width:17px;height:627px;background:#f0f0f0;"></div>
<div class="b" style="left:1868px;top:121px;width:14px;height:644px;background:#f6f6f6;border-radius:0 0 5px 0;"></div>
<div class="b" style="left:228px;top:748px;width:1640px;height:17px;background:#f0f0f0;"></div>
<svg class="b" style="left:1853px;top:127px;" width="12" height="10" viewBox="0 0 12 10"><path d="M2 7.500L6 3.500l4 4" fill="none" stroke="#bdbdbd" stroke-width="1.600"/></svg>
<svg class="b" style="left:1853px;top:735px;" width="12" height="10" viewBox="0 0 12 10"><path d="M2 2.500L6 6.500l4-4" fill="none" stroke="#bdbdbd" stroke-width="1.600"/></svg>
<svg class="b" style="left:269px;top:751px;" width="10" height="12" viewBox="0 0 10 12"><path d="M7.500 2L3.500 6l4 4" fill="none" stroke="#bdbdbd" stroke-width="1.600"/></svg>
<svg class="b" style="left:1838px;top:751px;" width="10" height="12" viewBox="0 0 10 12"><path d="M2.500 2L6.500 6l-4 4" fill="none" stroke="#bdbdbd" stroke-width="1.600"/></svg>
<span class="ln" style="left:225px;top:125px">1</span>
<span class="code" style="left:267px;top:125px"><i>'use strict'</i></span>
<span class="ln" style="left:225px;top:140px">2</span>
<span class="ln" style="left:225px;top:155px">3</span>
<span class="code" style="left:267px;top:155px"><b>let</b> tbody = $(<i>'#eListTable &gt; tbody'</i>);</span>
<span class="ln" style="left:225px;top:170px">4</span>
<span class="code" style="left:267px;top:170px"><b>let</b> data = <b>null</b>;</span>
<span class="ln" style="left:225px;top:185px">5</span>
<span class="code" style="left:267px;top:185px"><b>let</b> isClick = <b>false</b>;</span>
<span class="ln" style="left:225px;top:200px">6</span>
<span class="ln" style="left:225px;top:215px">7</span>
<span class="code" style="left:267px;top:215px">$(<b>function</b> loadList(){</span>
<span class="ln" style="left:225px;top:230px">8</span>
<span class="code" style="left:267px;top:230px">    console.log(<i>'<span class="k">로드됨</span>!'</i>);</span>
<span class="ln" style="left:225px;top:245px">9</span>
<span class="code" style="left:267px;top:245px">    $.getJSON(<u>`${serverApiAddr}/json/apply/myApplyList`</u>,{</span>
<span class="ln" style="left:225px;top:260px">10</span>
<span class="code" style="left:267px;top:260px">    }).done(<b>function</b>(resultApplyList){</span>
<span class="ln" style="left:225px;top:275px">11</span>
<span class="code" style="left:267px;top:275px">        data = resultApplyList;</span>
<span class="ln" style="left:225px;top:290px">12</span>
<span class="code" style="left:267px;top:290px">        tbody.html(<i>''</i>);</span>
<span class="ln" style="left:225px;top:305px">13</span>
<span class="code" style="left:267px;top:305px">        <b>for</b>(<b>var</b> item <b>of</b> data.myApplyList){</span>
<span class="ln" style="left:225px;top:320px">14</span>
<span class="code" style="left:267px;top:320px">            $(<i>"&lt;tr&gt;"</i>).html(<u>`&lt;th scope="row"&gt;${item.lectureNo}&lt;/th&gt;</u></span>
<span class="ln" style="left:225px;top:335px">15</span>
<span class="code" style="left:267px;top:335px">                        <u>&lt;td&gt;${item.lectureSubject}&lt;/td&gt;</u></span>
<span class="ln" style="left:225px;top:350px">16</span>
<span class="code" style="left:267px;top:350px">                        <u>&lt;td&gt;${item.lectureName}&lt;/td&gt;</u></span>
<span class="ln" style="left:225px;top:365px">17</span>
<span class="code" style="left:267px;top:365px">                        <u>&lt;td&gt;${item.lectureRoom}&lt;/td&gt;</u></span>
<span class="ln" style="left:225px;top:380px">18</span>
<span class="code" style="left:267px;top:380px">                        <u>&lt;td&gt;${item.lectureStartDay}&lt;/td&gt;</u></span>
<span class="ln" style="left:225px;top:395px">19</span>
<span class="code" style="left:267px;top:395px">                        <u>&lt;td&gt;${item.lectureEndDay}&lt;/td&gt;</u></span>
<span class="ln" style="left:225px;top:410px">20</span>
<span class="code" style="left:267px;top:410px">                        <u>&lt;td&gt;${item.lectureMember}/${item.lectureMaxMember}&lt;/td&gt;</u></span>
<span class="ln" style="left:225px;top:425px">21</span>
<span class="code" style="left:267px;top:425px">                        <u>&lt;td&gt;&lt;button type="button" id="cancel" class="btn btn-outline-success"&gt;<span class="k">철회하기</span>&lt;/button&gt;`</u>).appendTo(tbody);</span>
<span class="ln" style="left:225px;top:440px">22</span>
<span class="code" style="left:267px;top:440px">        }</span>
<span class="ln" style="left:225px;top:455px">23</span>
<span class="code" style="left:267px;top:455px">        <b>if</b>(isClick){</span>
<span class="ln" style="left:225px;top:470px">24</span>
<span class="code" style="left:267px;top:470px">            <b>return</b>;</span>
<span class="ln" style="left:225px;top:485px">25</span>
<span class="code" style="left:267px;top:485px">        }</span>
<span class="ln" style="left:225px;top:500px">26</span>
<span class="code" style="left:267px;top:500px">        isClick = <b>true</b>;</span>
<span class="ln" style="left:225px;top:515px">27</span>
<span class="code" style="left:267px;top:515px">        tbody.on(<i>'click'</i>, <i>'#cancel'</i>, <b>function</b>(event) {</span>
<span class="ln" style="left:225px;top:530px">28</span>
<span class="code" style="left:267px;top:530px">            isClick = <b>false</b>;</span>
<span class="ln" style="left:225px;top:545px">29</span>
<span class="code" style="left:267px;top:545px">            event.preventDefault();</span>
<span class="ln" style="left:225px;top:560px">30</span>
<span class="code" style="left:267px;top:560px">            $.getJSON(<u>`${serverApiAddr}/json/studentlist/applyDelete?lectureNo=${item.lectureNo}`</u>,</span>
<span class="ln" style="left:225px;top:575px">31</span>
<span class="code" style="left:267px;top:575px">                <b>function</b>(result){</span>
<span class="ln" style="left:225px;top:590px">32</span>
<span class="code" style="left:267px;top:590px">                <b>if</b>(result.status ==<i>"success"</i>){</span>
<span class="ln" style="left:225px;top:605px">33</span>
<span class="code" style="left:267px;top:605px">                    swal(<i>'<span class="k">강의신청을</span><span style="letter-spacing:-3.4px"> </span><span class="k">철회하였습니다</span>!'</i>);</span>
<span class="ln" style="left:225px;top:620px">34</span>
<span class="code" style="left:267px;top:620px">                }</span>
<span class="ln" style="left:225px;top:635px">35</span>
<span class="code" style="left:267px;top:635px">            })</span>
<span class="ln" style="left:225px;top:650px">36</span>
<span class="code" style="left:267px;top:650px">        });</span>
<span class="ln" style="left:225px;top:665px">37</span>
<span class="code" style="left:267px;top:665px">    });</span>
<span class="ln" style="left:225px;top:680px">38</span>
<span class="code" style="left:267px;top:680px">});</span>
<span class="ln" style="left:225px;top:695px">39</span>
<span class="ln" style="left:225px;top:710px">40</span>
<span class="ln" style="left:225px;top:725px">41</span>
<div class="b" style="left:226px;top:772px;width:1657px;height:201px;background:#ffffff;border-radius:8px 8px 6px 6px;border:1px solid #e4e8f4;border-bottom-color:#fff;"></div>
<div class="b" style="left:227px;top:772px;width:1655px;height:26px;background:#f3f5fc;border-radius:7px 7px 0 0;"></div>
<div class="b" style="left:673px;top:772px;width:94px;height:26px;background:linear-gradient(180deg,#dae3f0 0%,#ebf0f8 45%,#ffffff 100%);border-radius:9px 9px 0 0;"></div>
<span class="t " style="left:251px;top:777px;height:18px;line-height:18px;font-size:12px;color:#8c8c8c;letter-spacing:-0.334px;">Markers</span>
<span class="t " style="left:323px;top:777px;height:18px;line-height:18px;font-size:12px;color:#8c8c8c;letter-spacing:-0.269px;">Properties</span>
<span class="t " style="left:406px;top:777px;height:18px;line-height:18px;font-size:12px;color:#7a7a7a;letter-spacing:-0.192px;font-weight:bold;">Servers</span>
<span class="t " style="left:478px;top:777px;height:18px;line-height:18px;font-size:12px;color:#8c8c8c;letter-spacing:-0.086px;">Data Source Explorer</span>
<span class="t " style="left:620px;top:777px;height:18px;line-height:18px;font-size:12px;color:#8c8c8c;letter-spacing:-0.087px;">Snippets</span>
<span class="t " style="left:697px;top:777px;height:18px;line-height:18px;font-size:12px;color:#000;letter-spacing:-0.289px;">Console</span>
<span class="t " style="left:790px;top:777px;height:18px;line-height:18px;font-size:12px;color:#8c8c8c;letter-spacing:-0.502px;">Progress</span>
<svg class="b" style="left:746px;top:779px;" width="13" height="13" viewBox="0 0 13 13"><path d="M1.5 1.500h3l2 2.700 2-2.700h3v2.500L9 6.500l2.500 2.500v2.500h-3l-2-2.700-2 2.700h-3V9L4 6.500 1.500 4z" fill="#fff" stroke="#555" stroke-width="1"/></svg>
<svg class="b" style="left:230px;top:777px;opacity:.62;" width="16" height="16" viewBox="0 0 16 16"><rect x="1.500" y="1.500" width="13" height="13" fill="#f4f4f4" stroke="#b0b0b0"/><circle cx="6" cy="5.500" r="2.300" fill="#e05a4a"/><path d="M2.500 13c0-3 1.500-4.500 3.500-4.500s3.500 1.500 3.500 4.500z" fill="#c9b27a"/><path d="M11 3v10" stroke="#9ab0d0" stroke-width="1.500"/></svg>
<svg class="b" style="left:303px;top:777px;opacity:.62;" width="16" height="16" viewBox="0 0 16 16"><rect x="1.500" y="2.500" width="13" height="11" fill="#fbfbfb" stroke="#8a8a8a"/><path d="M1.500 5.500h13M5.500 5.500v8M1.500 8.500h13M1.500 11h13" stroke="#b0b0b0" stroke-width=".8" fill="none"/></svg>
<svg class="b" style="left:387px;top:777px;opacity:.62;" width="16" height="16" viewBox="0 0 16 16"><g stroke="#6a7a8a" stroke-width="1.200" fill="none"><path d="M4 2v12M8 2v12M12 2v12"/></g><rect x="2.500" y="8" width="3" height="3" fill="#d0a040"/><rect x="6.500" y="4" width="3" height="3" fill="#5a8ac0"/><rect x="10.500" y="9" width="3" height="3" fill="#8ab060"/></svg>
<svg class="b" style="left:457px;top:777px;opacity:.62;" width="17" height="16" viewBox="0 0 17 16"><path d="M1.500 3l4.500-1.500 5 1.500 4.500-1.500v11L11 14l-5-1.500L1.500 14z" fill="#a8c878" stroke="#6a8a3a" stroke-width="1"/><path d="M6 1.500v11M11 3v11" stroke="#6a8a3a" stroke-width=".9"/><rect x="7" y="6" width="6" height="5" fill="#7ab0e0" stroke="#3a6aa0" stroke-width=".7"/></svg>
<svg class="b" style="left:602px;top:777px;opacity:.62;" width="16" height="16" viewBox="0 0 16 16"><path d="M3.500 2.500h6l3 3v8h-9z" fill="#fafafa" stroke="#a0a0a0"/><path d="M2 6l4 1-1 4" fill="none" stroke="#d0a040" stroke-width="1.300"/><path d="M7 9h4M7 11h4" stroke="#b0b0b0"/></svg>
<svg class="b" style="left:678px;top:777px;" width="16" height="16" viewBox="0 0 16 16"><rect x="1.500" y="2.500" width="13" height="9" rx="1" fill="#e8f0fb" stroke="#2a4a8a" stroke-width="1.600"/><path d="M4.500 5.500h6M4.500 8h4" stroke="#2a4a8a" stroke-width="1.100"/><path d="M5 14h6M8 11.500v2.500" stroke="#2a4a8a" stroke-width="1.600"/></svg>
<svg class="b" style="left:771px;top:778px;opacity:.62;" width="16" height="16" viewBox="0 0 16 16"><rect x="1.500" y="4.500" width="9" height="5" fill="#b0d0a0" stroke="#8a9a8a"/><rect x="3" y="6" width="3" height="2" fill="#5aa050"/><circle cx="11" cy="10.500" r="3.300" fill="#6ab050" stroke="#3a7a2a" stroke-width=".8"/><path d="M10 8.800l2.600 1.700L10 12.200z" fill="#fff"/></svg>
<div class="b" style="left:1537px;top:780px;width:11px;height:11px;background:#e62a32;border-radius:1.5px;border:1px solid #b81820;"></div>
<svg class="b" style="left:1558px;top:778px;" width="15" height="15" viewBox="0 0 15 15"><path d="M2.500 2.500l10 10M12.500 2.500l-10 10" stroke="#8c8c8c" stroke-width="3.600"/></svg>
<svg class="b" style="left:1580px;top:777px;" width="17" height="17" viewBox="0 0 17 17"><path d="M2 5l10 10M12 5L2 15" stroke="#9a9a9a" stroke-width="2.600"/><path d="M7 2l8 8M15 2L7 10" stroke="#b0b0b0" stroke-width="2"/></svg>
<div class="b" style="left:1603px;top:777px;width:1px;height:17px;background:#8a8a8a;"></div>
<svg class="b" style="left:1611px;top:777px;" width="17" height="17" viewBox="0 0 17 17"><path d="M2.500 1.500h7l3 3v9h-10z" fill="#fbfbfb" stroke="#8a8a8a"/><path d="M4.500 5h5M4.500 7.500h6M4.500 10h4" stroke="#6a6a6a" stroke-width=".9"/><path d="M10 10l5 5M15 10l-5 5" stroke="#6a6a6a" stroke-width="1.700"/></svg>
<svg class="b" style="left:1634px;top:777px;" width="17" height="17" viewBox="0 0 17 17"><path d="M2.500 2.500h7l3 3v8h-10z" fill="#fbfbfb" stroke="#8a8a8a"/><rect x="1.500" y="8.500" width="7" height="6" fill="#f0b840" stroke="#a87a1a"/><path d="M3 8.500V6.700c0-2.300 4-2.300 4 0v1.800" fill="none" stroke="#a87a1a" stroke-width="1.200"/><path d="M12 4v10M14.500 4v10" stroke="#4a6ab0" stroke-width="1.300"/></svg>
<svg class="b" style="left:1657px;top:777px;" width="17" height="17" viewBox="0 0 17 17"><path d="M2.500 1.500h7l3 3v9h-10z" fill="#fbfbfb" stroke="#9a9a9a"/><path d="M4.500 5h5M4.500 7.500h6M4.500 10h4" stroke="#9a9a9a" stroke-width=".9"/><path d="M9 8h5v4h-3" fill="none" stroke="#d9a21b" stroke-width="1.500"/><path d="M12 10l-2.500 2 2.500 2z" fill="#d9a21b"/></svg>
<div class="b" style="left:1677px;top:774px;width:23px;height:21px;background:#c7e0fa;border:1px solid #8cc6f5;"></div>
<div class="b" style="left:1700px;top:774px;width:23px;height:21px;background:#c7e0fa;border:1px solid #8cc6f5;"></div>
<svg class="b" style="left:1680px;top:776.5px;" width="17" height="17" viewBox="0 0 17 17"><rect x="5.500" y="1.500" width="10" height="7" fill="#eef4fc" stroke="#3a5a9a" stroke-width="1.100"/><path d="M7.500 4h6M7.500 6h4" stroke="#3a5a9a" stroke-width=".9"/><rect x="1.500" y="6.500" width="8" height="5.500" fill="#dfe9f7" stroke="#3a5a9a" stroke-width="1.100"/><path d="M3 14.500h5M5.500 12v2.500" stroke="#3a5a9a" stroke-width="1.300"/></svg>
<svg class="b" style="left:1703px;top:776.5px;" width="17" height="17" viewBox="0 0 17 17"><rect x="5.500" y="1.500" width="10" height="7" fill="#eef4fc" stroke="#3a5a9a" stroke-width="1.100"/><path d="M7.500 3.200l3 3.300M10.500 3.200l-3 3.300" stroke="#e02a2a" stroke-width="1.400"/><path d="M12 4h2M12 6h2" stroke="#3a5a9a" stroke-width=".9"/><rect x="1.500" y="6.500" width="8" height="5.500" fill="#dfe9f7" stroke="#3a5a9a" stroke-width="1.100"/><path d="M3 14.500h5M5.500 12v2.500" stroke="#3a5a9a" stroke-width="1.300"/></svg>
<div class="b" style="left:1725px;top:777px;width:1px;height:17px;background:#8a8a8a;"></div>
<svg class="b" style="left:1734px;top:777px;" width="17" height="17" viewBox="0 0 17 17"><rect x="1.500" y="5.500" width="12" height="9" fill="#eef4fc" stroke="#5a7ab0"/><rect x="1.500" y="5.500" width="12" height="2.500" fill="#3a7ac8"/><path d="M8 11l4-5" stroke="#5a5a5a" stroke-width="1.200"/><path d="M10.500 6.500l2-4.500 3.500 1.500-1 3z" fill="#2aa04a" stroke="#1a7a2a" stroke-width=".7"/></svg>
<svg class="b" style="left:1759px;top:777px;" width="17" height="17" viewBox="0 0 17 17"><rect x="1.500" y="2.500" width="12" height="9" rx="1" fill="#efefef" stroke="#8a8a8a" stroke-width="1.500"/><path d="M4.500 5.500h6M4.500 8h4" stroke="#8a8a8a" stroke-width="1"/><path d="M4 14.500h7M7.500 11.500v3" stroke="#8a8a8a" stroke-width="1.500"/></svg>
<svg class="b" style="left:1779px;top:782px;" width="10" height="6" viewBox="0 0 10 6"><path d="M1 1h8L5 5z" fill="#6a6a6a"/></svg>
<svg class="b" style="left:1797px;top:776px;" width="17" height="18" viewBox="0 0 17 18"><rect x="1.500" y="4.500" width="12" height="11" fill="#fdfaf0" stroke="#5a7ab0"/><rect x="1.500" y="4.500" width="12" height="2.500" fill="#3a7ac8"/><path d="M12.500 1v6M9.500 4h6" stroke="#d9a21b" stroke-width="2.200"/><path d="M12.500 2v4M10.500 4h4" stroke="#fff3b0" stroke-width=".8"/></svg>
<svg class="b" style="left:1817px;top:782px;" width="10" height="6" viewBox="0 0 10 6"><path d="M1 1h8L5 5z" fill="#111"/></svg>
<svg class="b" style="left:1835px;top:780px;" width="12" height="6" viewBox="0 0 12 6"><rect x=".5" y=".5" width="10" height="3.200" fill="#fff" stroke="#444" stroke-width="1"/></svg>
<svg class="b" style="left:1858px;top:779.5px;" width="12" height="12" viewBox="0 0 12 12"><rect x=".5" y=".5" width="10" height="10" fill="#fff" stroke="#444" stroke-width="1"/><path d="M.5 2.500h10" stroke="#444" stroke-width="1.200"/></svg>
<span class="t " style="left:229px;top:798.5px;height:18px;line-height:18px;font-size:12px;color:#000;letter-spacing:0.153px;">Tomcat v9.0 Server at localhost [Apache Tomcat] E:<span style="font-family:'Liberation Mono',monospace;font-size:14px;letter-spacing:0">₩</span>jdk-10.0.2<span style="font-family:'Liberation Mono',monospace;font-size:14px;letter-spacing:0">₩</span>bin<span style="font-family:'Liberation Mono',monospace;font-size:14px;letter-spacing:0">₩</span>javaw.exe (2018. 9. 4. 오후 9:14:39)</span>
<div class="b" style="left:228px;top:815px;width:1654px;height:1px;background:#8e8e8e;"></div>
<span class="con" style="left:231px;top:821px;width:1633px">I</span>
<span class="con" style="left:231px;top:836px;width:1633px">J, lectureRoom=109, lectureFile=5ddc5fc0-4f7b-4a55-895a-2563b6ce1c1f, lectureMember=-13, lectureMaxMember=30, lectureAble=Y, lectureStartDay=2018-07-03, lectureEndDay=2018-09-03, lectureTime=2018-09-04 12:34:12.0], Lecture [lectureNo=6</span>
<span class="con" style="left:231px;top:851px;width:1633px">[Lecture [lectureNo=6, pNum=2, lectureName=asdafxcv, lectureSubject=cccbbb, lectureContent=sfdghsgh, lectureRoom=606, lectureFile=null, lectureMember=-27, lectureMaxMember=11, lectureAble=Y, lectureStartDay=2018-08-01, lectureEndDay=2018</span>
<span class="con" style="left:231px;top:866px;width:1633px">B</span>
<span class="con" style="left:231px;top:881px;width:1633px">C</span>
<span class="con" style="left:231px;top:896px;width:1633px">D</span>
<span class="con" style="left:231px;top:911px;width:1633px">E</span>
<span class="con" style="left:231px;top:926px;width:1633px">F</span>
<span class="con" style="left:231px;top:941px;width:1633px">G</span>
<div class="b" style="left:1865px;top:817px;width:17px;height:137px;background:#f0f0f0;"></div>
<div class="b" style="left:1866px;top:918px;width:15px;height:17px;background:#c8c8c8;"></div>
<svg class="b" style="left:1867px;top:820px;" width="12" height="10" viewBox="0 0 12 10"><path d="M2 7.500L6 3.500l4 4" fill="none" stroke="#505050" stroke-width="1.800"/></svg>
<svg class="b" style="left:1867px;top:940px;" width="12" height="10" viewBox="0 0 12 10"><path d="M2 2.500L6 6.500l4-4" fill="none" stroke="#505050" stroke-width="1.800"/></svg>
<div class="b" style="left:228px;top:954px;width:1654px;height:16px;background:#f0f0f0;"></div>
<div class="b" style="left:247px;top:955px;width:398px;height:14px;background:#c8c8c8;"></div>
<svg class="b" style="left:232px;top:956px;" width="10" height="12" viewBox="0 0 10 12"><path d="M7.500 2L3.500 6l4 4" fill="none" stroke="#505050" stroke-width="1.800"/></svg>
<svg class="b" style="left:1851px;top:956px;" width="10" height="12" viewBox="0 0 10 12"><path d="M2.500 2L6.500 6l-4 4" fill="none" stroke="#505050" stroke-width="1.800"/></svg>
<div class="b" style="left:1274px;top:973px;width:1px;height:22px;background:#a0a0a0;"></div>
<div class="b" style="left:1378px;top:973px;width:1px;height:22px;background:#a0a0a0;"></div>
<div class="b" style="left:1477px;top:973px;width:1px;height:22px;background:#a0a0a0;"></div>
<span class="t " style="left:1283px;top:975px;height:18px;line-height:18px;font-size:12px;color:#000;letter-spacing:0.151px;">Writable</span>
<span class="t " style="left:1386px;top:975px;height:18px;line-height:18px;font-size:12px;color:#000;letter-spacing:0.054px;">Smart Insert</span>
<span class="t " style="left:1485px;top:975px;height:18px;line-height:18px;font-size:12px;color:#000;letter-spacing:0.329px;">37 : 8</span>
<div class="b" style="left:1572.5px;top:979px;width:1.5px;height:1.5px;background:#9a9484;"></div>
<div class="b" style="left:1858px;top:979px;width:1.5px;height:1.5px;background:#b8a888;"></div>
<div class="b" style="left:1572.5px;top:982.5px;width:1.5px;height:1.5px;background:#9a9484;"></div>
<div class="b" style="left:1858px;top:982.5px;width:1.5px;height:1.5px;background:#b8a888;"></div>
<div class="b" style="left:1572.5px;top:986px;width:1.5px;height:1.5px;background:#9a9484;"></div>
<div class="b" style="left:1858px;top:986px;width:1.5px;height:1.5px;background:#b8a888;"></div>
<div class="b" style="left:1572.5px;top:989.5px;width:1.5px;height:1.5px;background:#9a9484;"></div>
<div class="b" style="left:1858px;top:989.5px;width:1.5px;height:1.5px;background:#b8a888;"></div>
<div class="b" style="left:1572.5px;top:993px;width:1.5px;height:1.5px;background:#9a9484;"></div>
<div class="b" style="left:1858px;top:993px;width:1.5px;height:1.5px;background:#b8a888;"></div>
<svg class="b" style="left:1866px;top:978px;" width="14" height="18" viewBox="0 0 14 18"><path d="M7 1.500c-3 0-4.800 2.200-4.800 4.600 0 1.800 1 2.800 1.800 3.900.5.700.6 1.500.6 2h4.800c0-.5.100-1.300.6-2 .8-1.100 1.800-2.100 1.800-3.900 0-2.400-1.800-4.600-4.800-4.600z" fill="#fdf0b0" stroke="#d9a21b" stroke-width="1.100"/><path d="M5 13.500h4M5.300 15.500h3.400" stroke="#8a8a8a" stroke-width="1.200"/></svg>
<div class="b" style="left:0px;top:1040px;width:1920px;height:40px;background:#0c0c0e;"></div>
<svg class="b" style="left:16px;top:1052px;" width="17" height="17" viewBox="0 0 17 17"><path d="M0 2.400L6.800 1.400V7.900H0zM7.700 1.300L16.500 0V7.900H7.700zM0 8.800H6.800V15.300L0 14.300zM7.700 8.800H16.500V16.700L7.700 15.400z" fill="#fff"/></svg>
<svg class="b" style="left:63px;top:1051px;" width="18" height="18" viewBox="0 0 18 18"><circle cx="11" cy="6.500" r="5" fill="none" stroke="#fff" stroke-width="1.500"/><path d="M7.400 10.200L1 16.800" stroke="#fff" stroke-width="1.600"/></svg>
<svg class="b" style="left:110px;top:1050px;" width="20" height="20" viewBox="0 0 20 20"><rect x="2.700" y="5.700" width="9.600" height="8.600" fill="none" stroke="#fff" stroke-width="1.400"/><path d="M2 2.700h11M2 17.300h11" stroke="#fff" stroke-width="1.400"/><path d="M2 2v2.500M13 2v2.500M2 15.500V18M13 15.500V18" stroke="#fff" stroke-width="1.200"/><path d="M16.500 1.500v3M16.500 9v9.500" stroke="#fff" stroke-width="1.400"/><rect x="15.300" y="5.500" width="2.400" height="2.400" fill="#fff"/></svg>
<svg class="b" style="left:158px;top:1048px;" width="25" height="22" viewBox="0 0 25 22"><path d="M1 3.500h9l1.500 2H24V20H1z" fill="#f7d775"/><path d="M1 7h23v13H1z" fill="#fbe49a"/><path d="M5 12h15v8H5z" fill="#3fa2e8"/><path d="M9 15.500h7V20H9z" fill="#fbe49a"/></svg>
<div class="b" style="left:151px;top:1078px;width:40px;height:2px;background:#76b9ed;"></div>
<svg class="b" style="left:204px;top:1042px;" width="34" height="34" viewBox="0 0 34 34"><path d="M5 27.500C1.500 24 4 14 12 8.500S27.500 4.500 28.500 8" fill="none" stroke="#f0b81c" stroke-width="2"/><text x="16.800" y="28.400" font-family="Liberation Sans, sans-serif" font-size="37" font-weight="bold" fill="#36b4ee" text-anchor="middle">e</text><path d="M5 27.500C2.500 25 3 21 5.500 17" fill="none" stroke="#f0b81c" stroke-width="2"/></svg>
<svg class="b" style="left:256px;top:1047px;" width="25" height="24" viewBox="0 0 25 24"><path d="M8 7V5c0-4.500 8.500-4.500 8.500 0v2" fill="none" stroke="#fff" stroke-width="1.500"/><path d="M1.500 7h22V22.500h-22z" fill="#fff"/><rect x="7" y="10.500" width="4.600" height="4.600" fill="#f25022"/><rect x="12.800" y="10.500" width="4.600" height="4.600" fill="#7fba00"/><rect x="7" y="16.300" width="4.600" height="4.600" fill="#00a4ef"/><rect x="12.800" y="16.300" width="4.600" height="4.600" fill="#ffb900"/></svg>
<svg class="b" style="left:305px;top:1048px;" width="27" height="23" viewBox="0 0 27 23"><path d="M1 8.500L13.200 1.500 25.400 8.500V21.300H1z" fill="#fff"/><path d="M2.600 8.500H24.200L15 13.500 19.600 17.800z" fill="#0c0c0e"/></svg>
<svg class="b" style="left:352px;top:1042px;" width="34" height="34" viewBox="0 0 34 34"><text x="15.500" y="28.800" font-family="Liberation Sans, sans-serif" font-size="37" font-weight="bold" fill="#1079d8" text-anchor="middle">e</text><path d="M5 12.500c2-4.500 6-6.500 10-5.500-4 .5-7 3-8.500 7.500z" fill="#1079d8"/></svg>
<svg class="b" style="left:403px;top:1050px;" width="27" height="20" viewBox="0 0 27 20"><path d="M5 1h21.500l-5 18H0z" fill="#3d6fd6"/><path d="M7.500 5l6 5-7 5" fill="none" stroke="#fff" stroke-width="2"/><path d="M13.500 15.500h6" stroke="#fff" stroke-width="1.800"/></svg>
<svg class="b" style="left:455px;top:1051px;" width="19" height="19" viewBox="0 0 19 19"><path d="M0 0h19v9.500L9.500 19H0z" fill="#fff"/><path d="M19 10.500V19H10.500z" fill="#fff"/><path d="M10.500 10h8L10.500 18z" fill="#0c0c0e"/></svg>
<div class="b" style="left:445px;top:1078px;width:40px;height:2px;background:#76b9ed;"></div>
<svg class="b" style="left:502px;top:1048px;" width="24" height="24" viewBox="0 0 24 24"><circle cx="12" cy="12" r="11.500" fill="#de4a3c"/><path d="M12 12L2.200 6.200A11.500 11.500 0 0 0 6.500 22z" fill="#2f9e50"/><path d="M12 12l-5.500 10A11.500 11.500 0 0 0 23.300 9.500H12z" fill="#f5c82f"/><circle cx="12" cy="12" r="5.300" fill="#fff"/><circle cx="12" cy="12" r="4.200" fill="#4a8cf0"/></svg>
<div class="b" style="left:494px;top:1078px;width:40px;height:2px;background:#76b9ed;"></div>
<div class="b" style="left:539px;top:1040px;width:48px;height:40px;background:#9f5a1e;"></div>
<div class="b" style="left:539px;top:1078px;width:48px;height:2px;background:#ff7a00;"></div>
<div class="b" style="left:551px;top:1048px;width:24px;height:24px;background:#fae100;"></div>
<svg class="b" style="left:553px;top:1050px;" width="20" height="20" viewBox="0 0 20 20"><ellipse cx="10" cy="9" rx="8.500" ry="7" fill="#3a1d1d"/><path d="M6 14l-1 4.500 4.500-3.500z" fill="#3a1d1d"/><text x="10" y="11.400" font-family="Liberation Sans, sans-serif" font-size="6.500" font-weight="bold" fill="#fae100" text-anchor="middle">TALK</text></svg>
<div class="b" style="left:588px;top:1040px;width:48px;height:40px;background:#3b3b3d;"></div>
<div class="b" style="left:588px;top:1078px;width:48px;height:2px;background:#76b9ed;"></div>
<div class="b" style="left:600px;top:1048px;width:24px;height:24px;background:#57398c;border-radius:2px;"></div>
<svg class="b" style="left:600px;top:1048px;" width="24" height="24" viewBox="0 0 24 24"><g transform="translate(12 12)" fill="#a8a8a8"><rect x="-2" y="-11.500" width="4" height="23"/><rect x="-2" y="-11.500" width="4" height="23" transform="rotate(45)"/><rect x="-2" y="-11.500" width="4" height="23" transform="rotate(90)"/><rect x="-2" y="-11.500" width="4" height="23" transform="rotate(135)"/><circle r="8.500"/><circle r="5" fill="#57398c"/></g><text x="12" y="10.500" font-family="Liberation Sans, sans-serif" font-size="6.500" font-weight="bold" fill="#ff9a1c" text-anchor="middle">Java EE</text><text x="12" y="17.500" font-family="Liberation Sans, sans-serif" font-size="8" font-weight="bold" fill="#ff9a1c" text-anchor="middle">IDE</text></svg>
<svg class="b" style="left:1628px;top:1051px;" width="18" height="18" viewBox="0 0 18 18"><circle cx="11.500" cy="4.500" r="2.600" fill="none" stroke="#fff" stroke-width="1.200"/><circle cx="5.500" cy="8.500" r="2.600" fill="none" stroke="#fff" stroke-width="1.200"/><path d="M1 16.500c0-3 2-4.800 4.500-4.800s4.500 1.800 4.500 4.800M9 9.500c1.500-1.500 5.500-1.500 7 2" fill="none" stroke="#fff" stroke-width="1.200"/></svg>
<svg class="b" style="left:1666px;top:1055px;" width="14" height="9" viewBox="0 0 14 9"><path d="M1 7.500L7 1.500l6 6" fill="none" stroke="#fff" stroke-width="1.400"/></svg>
<svg class="b" style="left:1690px;top:1051px;" width="18" height="18" viewBox="0 0 18 18"><g fill="none" stroke="#fff" stroke-width="1.200"><path d="M2 16a14 14 0 0 1 14-14"/><path d="M5.500 16a10.500 10.500 0 0 1 10.500-10.500"/><path d="M9 16a7 7 0 0 1 7-7"/><path d="M12.500 16a3.500 3.500 0 0 1 3.500-3.500"/></g></svg>
<svg class="b" style="left:1712px;top:1051px;" width="20" height="18" viewBox="0 0 20 18"><path d="M1.500 6.500h3l4-3.500v12l-4-3.500h-3z" fill="none" stroke="#fff" stroke-width="1.200"/><path d="M11 6.500c1.500 1.500 1.500 3.500 0 5M13.500 4.500c2.600 2.600 2.600 6.400 0 9M16 2.500c3.700 3.700 3.700 9.300 0 13" fill="none" stroke="#fff" stroke-width="1.100"/></svg>
<svg class="b" style="left:1740px;top:1050px;" width="19" height="19" viewBox="0 0 19 19"><path d="M3 14c-2-3 2-7 5-6s2 6-1 8 6-1 6-5M9 15l6.500-11 2 1.200L11 16.500l-2.500 1z" fill="none" stroke="#fff" stroke-width="1.200"/></svg>
<span class="t " style="left:1768.5px;top:1051px;height:18px;line-height:18px;font-size:19px;color:#fff;font-family:'Liberation Sans',sans-serif;">A</span>
<span class="t " style="left:1797px;top:1042px;height:18px;line-height:18px;font-size:12px;color:#fff;letter-spacing:0.455px;">오후 10:04</span>
<span class="t " style="left:1794px;top:1060px;height:18px;line-height:18px;font-size:12px;color:#fff;letter-spacing:0.462px;">2018-09-04</span>
<svg class="b" style="left:1878px;top:1050px;" width="30" height="30" viewBox="0 0 30 30"><path d="M1.500 2h15.500v12h-3v3.500l-3.500-3.500h-9z" fill="#fff"/><path d="M4 5h10.500M4 7.500h10.500M4 10h10.500" stroke="#0c0c0e" stroke-width="1"/><circle cx="17" cy="17.500" r="9.300" fill="#303030" stroke="#6e6e6e" stroke-width="1"/></svg>
<span class="t " style="left:1888px;top:1058.5px;height:18px;line-height:18px;font-size:12.5px;color:#fff;">23</span>
<div class="b" style="left:1915px;top:1040px;width:1px;height:40px;background:#5a5a5a;"></div>
</body></html>
